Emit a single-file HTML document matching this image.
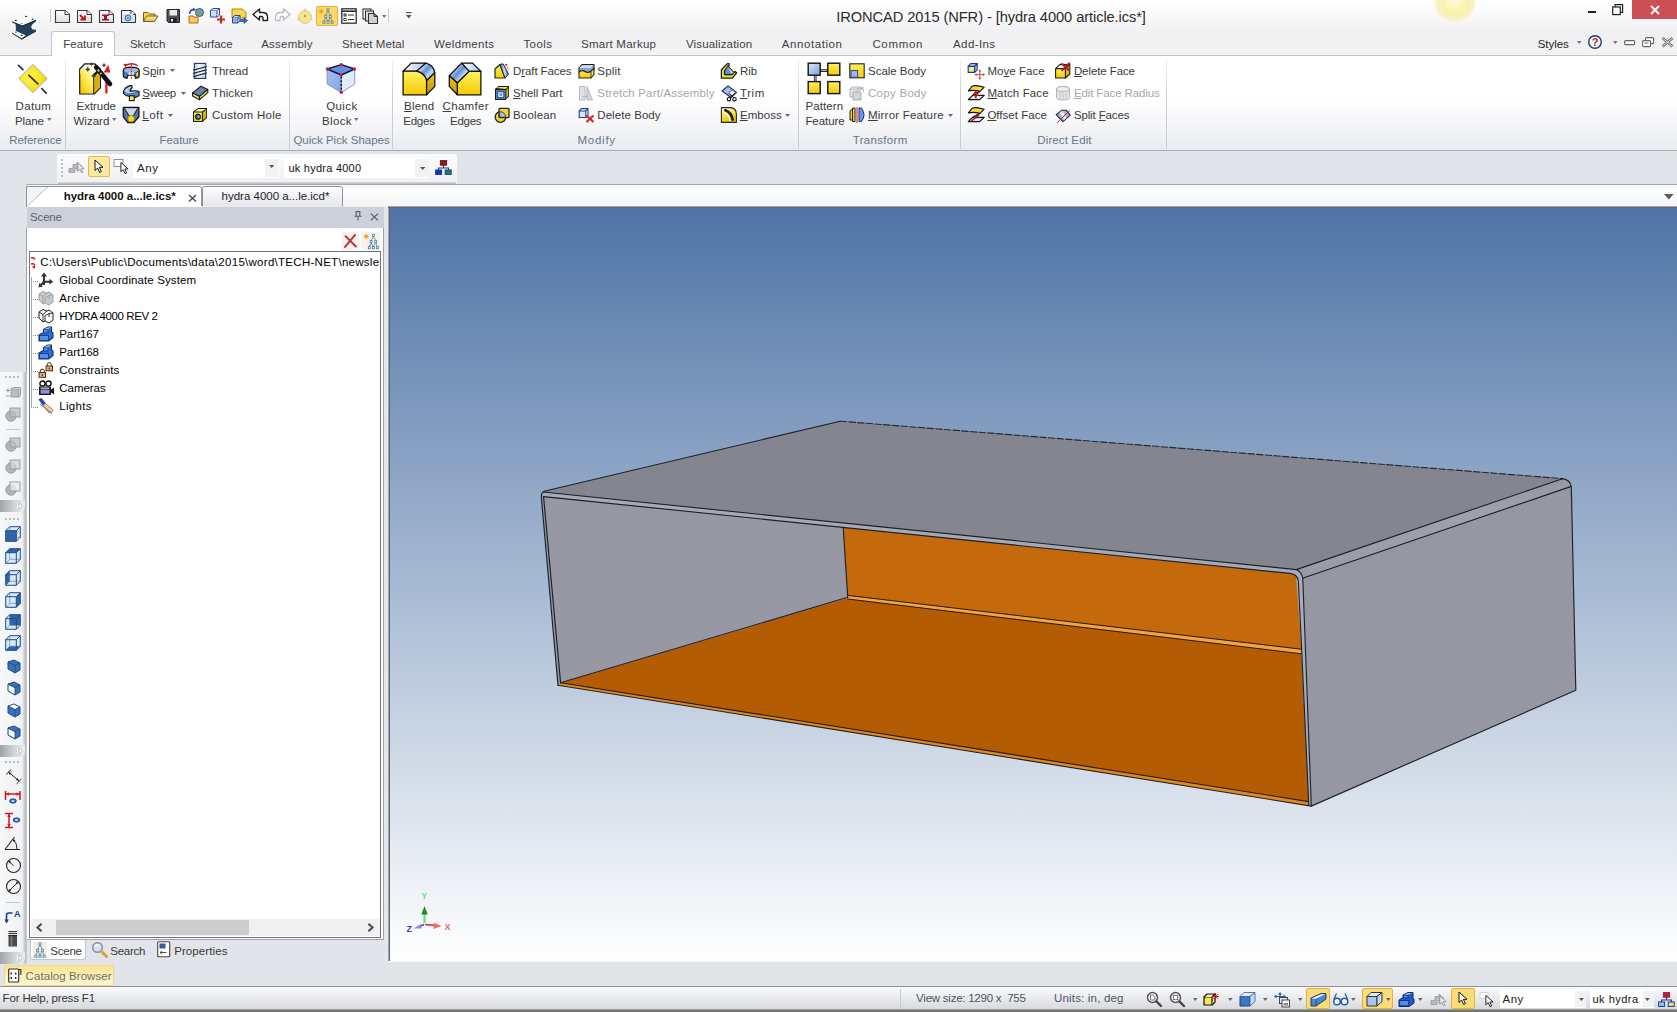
<!DOCTYPE html>
<html>
<head>
<meta charset="utf-8">
<title>IRONCAD 2015 (NFR) - [hydra 4000 article.ics*]</title>
<style>
*{box-sizing:border-box;margin:0;padding:0}
html,body{width:1677px;height:1012px;overflow:hidden;background:#e1e4e8}
body{position:relative;font-family:"Liberation Sans",sans-serif;font-size:11.5px;color:#3c3c3c}
.abs{position:absolute}
.t{position:absolute;white-space:pre;line-height:14px;height:14px}
.g{color:#9a9da1}
.lbl{color:#6e7b8c}
svg{position:absolute;overflow:visible}
u{text-decoration:underline;text-underline-offset:1px}
/* ---- title + ribbon ---- */
#title{left:0;top:0;width:1677px;height:56px;background:linear-gradient(#ffffff 0px,#f7f7f8 20px,#efeff1 36px,#f4f4f5 56px)}
#tabline{left:0;top:55px;width:1677px;height:1px;background:#c2c5c9}
#ftab{left:51px;top:31px;width:64px;height:25px;background:#fff;border:1px solid #c2c5c9;border-bottom:none;border-radius:3px 3px 0 0}
#ribbon{left:0;top:56px;width:1677px;height:94px;background:linear-gradient(#ffffff 0px,#ffffff 42px,#f5f6f8 68px,#e8ebef 94px)}
#ribline{left:0;top:150px;width:1677px;height:1px;background:#a9adb3}
.sep{position:absolute;top:58px;width:1px;height:91px;background:linear-gradient(rgba(200,203,208,.2),#c9ccd1 40%,#c9ccd1)}
#tbarea{left:0;top:151px;width:1677px;height:32px;background:#e1e4e8}
#seltb{left:57px;top:154px;width:400px;height:29px;background:linear-gradient(#fcfcfd,#eff0f3);border-radius:3px 3px 0 0}
#docrow{left:26px;top:184px;width:1651px;height:23px;background:linear-gradient(#f4f5f6 0,#fefefe 5px,#f2f3f5 23px);border-top:1px solid #a6a9ae}
#seltbsh{left:58px;top:182px;width:398px;height:2px;background:linear-gradient(#d9dbdf,#b4b7bd)}
/* ---- viewport ---- */
#vp{left:390px;top:208px;width:1287px;height:753px;background:linear-gradient(rgb(79,116,166),rgb(255,255,255))}
#vpbL{left:388px;top:206px;width:2px;height:755px;background:linear-gradient(90deg,#a2a6ad 0 1px,#5c6573 1px 2px)}
#vpbT{left:388px;top:206px;width:1289px;height:2px;background:linear-gradient(#a2a6ad 0 1px,#5c6573 1px 2px)}
#vpbB{left:388px;top:961px;width:1289px;height:1px;background:#f6f7f8}
/* ---- scene panel ---- */
#scenehdr{left:27px;top:207px;width:357px;height:21px;background:#ccd1d9}
#scenebody{left:26px;top:228px;width:358px;height:712px;background:#fff;border:1px solid #9ea2a8;border-top:none}
#tree{left:29px;top:251px;width:352px;height:687px;background:#fff;border:1px solid #6f7378}
#split{left:384px;top:207px;width:4px;height:755px;background:#e4e6ea}
#lefttb{left:0;top:375px;width:25px;height:486px;background:linear-gradient(90deg,#f6f7f8,#eceef0);border-radius:0 3px 3px 0}
/* ---- bottom ---- */
#status{left:0;top:987px;width:1677px;height:23px;background:linear-gradient(#fbfbfc 0,#f0f1f3 30%,#e0e2e6 70%,#d6d9dd 100%)}
#statline{left:0;top:986px;width:1677px;height:1px;background:#8e9196}
#botline{left:0;top:1009px;width:1677px;height:3px;background:linear-gradient(#b4b6b9,#7a7a7a 40%,#6e6e6e)}
</style>
</head>
<body>
<!-- TITLE / TABS -->
<div id="title" class="abs"></div>
<div id="tabline" class="abs"></div>
<div id="ftab" class="abs"></div>
<div id="ribbon" class="abs"></div>
<div id="ribline" class="abs"></div>
<div id="tbarea" class="abs"></div>
<div id="seltb" class="abs"></div>
<div id="docrow" class="abs"></div>
<div id="seltbsh" class="abs"></div>
<!--TITLEBAR-->
<!--RIBBON_START-->
<svg width="0" height="0" style="left:0;top:0"><defs>
<linearGradient id="gy" x1="0" y1="0" x2="0" y2="1"><stop offset="0" stop-color="#fff262"/><stop offset="1" stop-color="#f6ca00"/></linearGradient>
<linearGradient id="gy2" x1="0" y1="0" x2="1" y2="1"><stop offset="0" stop-color="#fff9a0"/><stop offset="1" stop-color="#e8b800"/></linearGradient>
<linearGradient id="gyd" x1="0" y1="0" x2="0" y2="1"><stop offset="0" stop-color="#e9c21a"/><stop offset="1" stop-color="#c79a00"/></linearGradient>
<linearGradient id="gb" x1="0" y1="0" x2="1" y2="1"><stop offset="0" stop-color="#dbe8fa"/><stop offset="1" stop-color="#7f9fd6"/></linearGradient>
<linearGradient id="gb2" x1="0" y1="0" x2="1" y2="0"><stop offset="0" stop-color="#456fae"/><stop offset=".5" stop-color="#c9dcf3"/><stop offset="1" stop-color="#4b76b4"/></linearGradient>
<linearGradient id="gdoc" x1="0" y1="0" x2="0" y2="1"><stop offset="0" stop-color="#ffffff"/><stop offset="1" stop-color="#dcdde1"/></linearGradient>
<linearGradient id="gfold" x1="0" y1="0" x2="0" y2="1"><stop offset="0" stop-color="#fff0a0"/><stop offset="1" stop-color="#e2b83a"/></linearGradient>
<radialGradient id="glow"><stop offset="0" stop-color="#fffbe0"/><stop offset=".55" stop-color="#fbf2a8"/><stop offset=".85" stop-color="#f7ecb0" stop-opacity=".7"/><stop offset="1" stop-color="#f7ecb0" stop-opacity="0"/></radialGradient>
</defs></svg>
<svg style="left:8px;top:10px" width="32" height="32" viewBox="8 10 32 32"><path d="M15.6,23 L15.9,31 L21.8,39.6 L36,31.8 L36,29.6 Q32,30.5 31.2,27.5 Q31,24.5 36,21.5 L36,19.8 L22.3,25.6Z" fill="#22405a"/><path d="M12,21.3 L25.5,14.9 L36,19.7 L22.3,25.5Z" fill="#fbfbfc"/><path d="M12,21.3 L22.3,25.5 L36,19.7 L36,20.9 L22.3,26.8 L12,22.5Z" fill="#1c2c3c"/><path d="M12,32.4 L15.7,30.7 L25.9,35.4 L21.8,38.6Z" fill="#f4f5f7"/><path d="M12,32.4 L21.8,38.6 L25.9,35.4 L25.9,36.4 L21.8,39.8 L12,33.5Z" fill="#1c2c3c"/><ellipse cx="15.8" cy="20.4" rx="1.1" ry=".6" fill="#222"/><ellipse cx="26" cy="16.4" rx="1.1" ry=".6" fill="#222"/><ellipse cx="32.6" cy="19.2" rx="1" ry=".6" fill="#222"/><ellipse cx="21.7" cy="23.6" rx="1" ry=".6" fill="#6a8096"/><ellipse cx="15.9" cy="32.1" rx=".9" ry=".5" fill="#222"/><ellipse cx="21.6" cy="35.4" rx="1" ry=".55" fill="#222"/></svg>
<div class="abs" style="left:50px;top:9px;width:1px;height:13px;background:#c4c6ca"></div>
<svg style="left:54.0px;top:8.0px" width="17" height="16" viewBox="0 0 17 16"><path d="M1.5,2.5H11L15.5,6.5V14.5H1.5Z" fill="url(#gdoc)" stroke="#3a3a3a" stroke-width="1.1" stroke-linejoin="round"/><path d="M11,2.5V6.5H15.5" fill="#fff" stroke="#3a3a3a" stroke-width="1"/></svg>
<svg style="left:76.0px;top:8.0px" width="17" height="16" viewBox="0 0 17 16"><path d="M1.5,2.5H11L15.5,6.5V14.5H1.5Z" fill="url(#gdoc)" stroke="#3a3a3a" stroke-width="1.1" stroke-linejoin="round"/><path d="M11,2.5V6.5H15.5" fill="#fff" stroke="#3a3a3a" stroke-width="1"/><path d="M4,7L8,11M4.5,11.5H9V7.5" stroke="#c01818" stroke-width="1.8" fill="none"/></svg>
<svg style="left:98.0px;top:8.0px" width="17" height="16" viewBox="0 0 17 16"><path d="M1.5,2.5H11L15.5,6.5V14.5H1.5Z" fill="url(#gdoc)" stroke="#3a3a3a" stroke-width="1.1" stroke-linejoin="round"/><path d="M11,2.5V6.5H15.5" fill="#fff" stroke="#3a3a3a" stroke-width="1"/><path d="M4,6.5H11V8H9V11H11V12.5H4V11H6V8H4Z" fill="#a80f1c"/></svg>
<svg style="left:120.0px;top:8.0px" width="17" height="16" viewBox="0 0 17 16"><path d="M1.5,2.5H11L15.5,6.5V14.5H1.5Z" fill="url(#gdoc)" stroke="#3a3a3a" stroke-width="1.1" stroke-linejoin="round"/><path d="M11,2.5V6.5H15.5" fill="#fff" stroke="#3a3a3a" stroke-width="1"/><rect x="3" y="6" width="10" height="7.5" fill="#cfe3f6"/><circle cx="8" cy="10" r="2.6" fill="none" stroke="#3e78b8" stroke-width="1.2"/><circle cx="8" cy="10" r=".9" fill="#2a5a98"/></svg>
<svg style="left:142.0px;top:8.0px" width="17" height="16" viewBox="0 0 17 16"><path d="M1.5,13.5V4.5H6L7.5,6H13V8" fill="#f2d25a" stroke="#7a5c10" stroke-width="1"/><path d="M1.5,13.5L4.5,8H16L12.5,13.5Z" fill="url(#gfold)" stroke="#7a5c10" stroke-width="1" stroke-linejoin="round"/></svg>
<svg style="left:166.0px;top:8.0px" width="15" height="16" viewBox="0 0 15 16"><path d="M1,1.5H13.5V14.5H2.5L1,13Z" fill="#4a4f58" stroke="#23262b" stroke-width="1"/><rect x="3.5" y="2" width="7.5" height="5.5" fill="#e6e9ee"/><rect x="4" y="10" width="6.5" height="4.5" fill="#1d2026"/><rect x="5" y="11" width="2" height="2.5" fill="#e6e9ee"/></svg>
<svg style="left:187.0px;top:7.0px" width="18" height="18" viewBox="0 0 18 18"><path d="M2,16V9H6L7,10H11V16Z" fill="#f6c860" stroke="#b86a10" stroke-width="1"/><circle cx="12.5" cy="5.5" r="4" fill="#7a9ad8" stroke="#3a4a9a" stroke-width="1"/><path d="M9,5 Q12,2 15,6 Q13,9 10,8Z" fill="#6bb04a"/><path d="M2.5,7 Q3,2.5 7,2.5" fill="none" stroke="#2a4ab0" stroke-width="1.6"/><path d="M6,.8L9,2.6L6,4.6Z" fill="#2a4ab0"/></svg>
<svg style="left:209.0px;top:7.0px" width="17" height="18" viewBox="0 0 17 18"><path d="M1.5,3.5H8V10H1.5Z" fill="#cfe0f6" stroke="#2a4a9a" stroke-width="1"/><path d="M1.5,3.5L4,1.5H10.5L8,3.5M10.5,1.5V8L8,10" fill="#e8f0fb" stroke="#2a4a9a" stroke-width="1"/><path d="M12,8.5V16.5M8,12.5H16" stroke="#c8281e" stroke-width="2.2"/></svg>
<svg style="left:231.0px;top:7.0px" width="17" height="18" viewBox="0 0 17 18"><path d="M1,2H11L15,5.5V11H1Z" fill="#f7d84a" stroke="#a88a10" stroke-width="1"/><path d="M1.5,10.5H7V16H1.5Z" fill="#8fb2e4" stroke="#2a4a9a" stroke-width="1"/><path d="M1.5,10.5L3.5,8.5H9L7,10.5M9,8.5V14L7,16" fill="#c6d8f2" stroke="#2a4a9a" stroke-width="1"/><path d="M9.5,12.5H13V10.5L16.5,13.5L13,16.5V14.5H9.5Z" fill="#3a66c0" stroke="#1a3a8a" stroke-width=".6"/></svg>
<svg style="left:252.0px;top:8.0px" width="17" height="14" viewBox="0 0 17 14"><path d="M1,6.5L7.5,1V4.5H10.5Q15.5,4.5 15.5,9V12.5H11V10.5Q11,8.5 9.5,8.5H7.5V12Z" fill="#fff" stroke="#222" stroke-width="1.4" stroke-linejoin="round"/></svg>
<svg style="left:274.0px;top:8.0px" width="17" height="14" viewBox="0 0 17 14"><path d="M16,6.5L9.5,1V4.5H6.5Q1.5,4.5 1.5,9V12.5H6V10.5Q6,8.5 7.5,8.5H9.5V12Z" fill="#fbfbfc" stroke="#b9bcc2" stroke-width="1.3" stroke-linejoin="round"/></svg>
<svg style="left:296.0px;top:7.0px" width="18" height="18" viewBox="0 0 18 18"><circle cx="9" cy="10" r="6.5" fill="#f3e58c" stroke="#d8cf9a" stroke-width="1"/><path d="M9,1.5V4M1.5,13L3.5,12M16.5,13L14.5,12" stroke="#c9c39a" stroke-width="1.2"/><circle cx="9" cy="9" r=".9" fill="#c86a28"/></svg>
<div class="abs" style="left:316px;top:6px;width:22px;height:20px;background:#fbd867;border:1px solid #e8b23a;border-radius:2px"></div>
<svg style="left:318.0px;top:8.0px" width="17" height="16" viewBox="0 0 17 16"><g transform="translate(2,0)"><g fill="#eef6fc" stroke="#467a9e" stroke-width=".75"><path d="M8,3L5.7,7.2M8,3L10.3,7.2M5.7,9.4L3.9,13.1M5.7,9.4L8,13.1M10.3,9.4L8,13.1M10.3,9.4L12.1,13.1" fill="none"/><rect x="7" y=".8" width="2" height="2.2"/><rect x="4.7" y="7.2" width="2" height="2.2"/><rect x="9.3" y="7.2" width="2" height="2.2"/><rect x="2.9" y="13.1" width="2" height="2.2"/><rect x="7" y="13.1" width="2" height="2.2"/><rect x="11.1" y="13.1" width="2" height="2.2"/></g></g><path d="M3.2,.4V6.2M.3,3.3H6.1M1.2,1.3L5.2,5.3M5.2,1.3L1.2,5.3" stroke="#f2b430" stroke-width=".8"/><circle cx="3.2" cy="3.3" r="1.7" fill="#eea11a"/></svg>
<svg style="left:341.0px;top:8.0px" width="16" height="16" viewBox="0 0 16 16"><rect x=".8" y=".8" width="14.4" height="14.4" fill="#fff" stroke="#2e2e2e" stroke-width="1.3"/><path d="M.8,3.2H15.2" stroke="#2e2e2e" stroke-width="1.6"/><rect x="3" y="6" width="2" height="2" fill="none" stroke="#2e2e2e"/><rect x="3" y="10.5" width="2" height="2" fill="none" stroke="#2e2e2e"/><path d="M7,7H13M7,11.5H13" stroke="#2e2e2e" stroke-width="1.2"/></svg>
<svg style="left:362.0px;top:8.0px" width="18" height="17" viewBox="0 0 18 17"><rect x="1" y="1" width="8" height="10" fill="#fff" stroke="#333" stroke-width="1.1"/><rect x="3.5" y="3" width="8" height="10" fill="#e4e4e6" stroke="#333" stroke-width="1.1"/><path d="M6.5,5.5H12L15.5,8.5V15.5H6.5Z" fill="#cfd1d5" stroke="#333" stroke-width="1.1"/><path d="M12,5.5V8.5H15.5" fill="none" stroke="#333" stroke-width="1"/></svg>
<svg style="left:381.5px;top:14.5px" width="4.4" height="3" viewBox="0 0 4.4 3"><path d="M0,0H4.4L2.2,3Z" fill="#777"/></svg>
<div class="abs" style="left:388px;top:9px;width:1px;height:13px;background:#c9ccd0"></div>
<svg style="left:405.5px;top:12.0px" width="6" height="8" viewBox="0 0 6 8"><path d="M0,.6H5.6" stroke="#555" stroke-width="1.2"/><path d="M0,3H5.6L2.8,6.4Z" fill="#555"/></svg>
<svg style="left:1433.0px;top:-21.0px" width="44" height="44" viewBox="0 0 44 44"><circle cx="22" cy="22" r="22" fill="url(#glow)"/></svg>
<div class="abs" style="left:1588px;top:11px;width:8px;height:2px;background:#222"></div>
<svg style="left:1612.0px;top:4.0px" width="12" height="12" viewBox="0 0 12 12"><rect x=".7" y="3" width="7.6" height="7.6" fill="#fff" stroke="#222" stroke-width="1.2"/><path d="M3,3V.7H10.6V8.3H8.3" fill="none" stroke="#222" stroke-width="1.2"/></svg>
<div class="abs" style="left:1632px;top:0;width:45px;height:19px;background:#cb4f55"></div>
<svg style="left:1650.0px;top:5.0px" width="10" height="10" viewBox="0 0 10 10"><path d="M1,1L9,9M9,1L1,9" stroke="#fff" stroke-width="1.8"/></svg>
<svg style="left:1577.0px;top:40.5px" width="4.6" height="3" viewBox="0 0 4.6 3"><path d="M0,0H4.6L2.3,3Z" fill="#777"/></svg>
<svg style="left:1587.0px;top:34.0px" width="16" height="16" viewBox="0 0 16 16"><circle cx="8" cy="8" r="6.3" fill="#f7f9fc" stroke="#1f3a70" stroke-width="1.4"/><text x="8" y="12" text-anchor="middle" font-family="Liberation Sans" font-weight="bold" font-size="11" fill="#c8161c">?</text></svg>
<svg style="left:1612.5px;top:40.5px" width="4.6" height="3" viewBox="0 0 4.6 3"><path d="M0,0H4.6L2.3,3Z" fill="#777"/></svg>
<svg style="left:1624.0px;top:40.0px" width="12" height="6" viewBox="0 0 12 6"><rect x=".6" y=".6" width="10" height="4" rx="1" fill="#fff" stroke="#666" stroke-width="1.1"/></svg>
<svg style="left:1642.0px;top:37.0px" width="13" height="11" viewBox="0 0 13 11"><rect x="3.6" y=".6" width="8" height="6" rx="1" fill="#fff" stroke="#666" stroke-width="1.1"/><rect x=".6" y="3.6" width="8" height="6" rx="1" fill="#fff" stroke="#666" stroke-width="1.1"/><path d="M2.5,6H6.5" stroke="#666"/></svg>
<svg style="left:1661.0px;top:37.0px" width="13" height="11" viewBox="0 0 13 11"><path d="M1.5,1L11.5,9.5M11.5,1L1.5,9.5" stroke="#666" stroke-width="2.6"/><path d="M1.5,1L11.5,9.5M11.5,1L1.5,9.5" stroke="#fff" stroke-width=".9"/></svg>
<div class="sep" style="left:65.0px"></div>
<div class="sep" style="left:288.5px"></div>
<div class="sep" style="left:392.0px"></div>
<div class="sep" style="left:797.5px"></div>
<div class="sep" style="left:959.5px"></div>
<div class="sep" style="left:1166.0px"></div>
<svg style="left:16.0px;top:62.0px" width="34" height="34" viewBox="0 0 34 34"><defs><radialGradient id="dpg" cx=".4" cy=".45" r=".7"><stop offset="0" stop-color="#fff64a"/><stop offset=".6" stop-color="#f4e21e"/><stop offset="1" stop-color="#d9c008"/></radialGradient></defs><path d="M2,2.8L7.4,8.2M25.3,26.1L30.7,31.6" stroke="#2e2e55" stroke-width="1.7"/><path d="M17,2.3L31.2,16.5L17,30.7L2.8,16.5Z" fill="url(#dpg)" stroke="#aab0d0" stroke-width="1"/><path d="M12.4,12.8L22.4,22.4" stroke="#3a2608" stroke-width="1.7"/></svg>
<svg style="left:46.5px;top:118.3px" width="4.6" height="3" viewBox="0 0 4.6 3"><path d="M0,0H4.6L2.3,3Z" fill="#777"/></svg>
<svg style="left:76px;top:60px" width="40" height="38" viewBox="76 60 40 38"><defs><linearGradient id="ewf" x1="1" y1="0" x2="0" y2="1"><stop offset="0" stop-color="#fffef0"/><stop offset=".35" stop-color="#fff36a"/><stop offset="1" stop-color="#f3bf00"/></linearGradient></defs><path d="M79.1,68.8 L84.5,63.2 H95 L101,69 V88 L94.6,94.6 H79.1Z" fill="#141414"/><path d="M80.3,69.4 L85,64.4 H94.4 L99,68.8 L93.4,74 H80.3Z" fill="#fbf8e4"/><path d="M80.3,69.6 H93.2 V93.6 H80.3Z" fill="url(#ewf)"/><path d="M94.1,76.5 L100,71 V87.6 L94.1,93.4Z" fill="#dcae08"/><path d="M106.4,93.4 V80" stroke="#e41a1a" stroke-width="2.3"/><path d="M103.6,72.5 L108.2,64.8 L110.4,72.5Z" fill="#e41a1a"/><path d="M96.2,67.2 L110,84" stroke="#121212" stroke-width="4.6" stroke-linecap="round"/><path d="M97.6,69.4 L99.2,71.4 M100.4,72.8 L101.4,74" stroke="#d8d8d8" stroke-width="1.6"/><g fill="#3a3a3a"><path d="M87.8,66.6l.9,1.8 1.8.9-1.8.9-.9,1.8-.9-1.8-1.8-.9 1.8-.9z"/><path d="M93.6,73.2l.9,1.8 1.8.9-1.8.9-.9,1.8-.9-1.8-1.8-.9 1.8-.9z"/><path d="M91.4,62l.7,1.4 1.4.7-1.4.7-.7,1.4-.7-1.4-1.4-.7 1.4-.7z"/><path d="M104,62.8l.8,1.6 1.6.8-1.6.8-.8,1.6-.8-1.6-1.6-.8 1.6-.8z"/></g></svg>
<svg style="left:111.5px;top:118.3px" width="4.6" height="3" viewBox="0 0 4.6 3"><path d="M0,0H4.6L2.3,3Z" fill="#777"/></svg>
<svg style="left:324px;top:61px" width="34" height="35" viewBox="324 61 34 35"><defs><linearGradient id="qbl" x1="0" y1="0" x2="1" y2="1"><stop offset="0" stop-color="#a9c2f0"/><stop offset="1" stop-color="#7fa4e4"/></linearGradient></defs><path d="M327,69 L341.3,75 V92.6 L327.2,84.1Z" fill="url(#qbl)" stroke="#6a86c0" stroke-width=".8"/><path d="M341.3,75 L354.6,69 L354.8,84.1 L341.3,92.6Z" fill="#dfeafb" stroke="#6a86c0" stroke-width=".8"/><path d="M327,69 L341.3,64.6 L354.6,69 L341.3,75Z" fill="#6690dc" stroke="#0e1a4a" stroke-width="1.5" stroke-linejoin="round"/><path d="M341.3,76.5 V91" stroke="#0e1030" stroke-width="1.4" stroke-dasharray="2,1.7"/><g fill="#c81e3c"><circle cx="327.4" cy="69" r="1.7"/><circle cx="341.3" cy="64.8" r="1.7"/><circle cx="354.4" cy="69" r="1.7"/><circle cx="341.3" cy="75" r="1.7"/><circle cx="341.3" cy="92.2" r="1.7"/></g></svg>
<svg style="left:354.0px;top:118.3px" width="4.6" height="3" viewBox="0 0 4.6 3"><path d="M0,0H4.6L2.3,3Z" fill="#777"/></svg>
<svg style="left:400px;top:60px" width="38" height="38" viewBox="400 60 38 38"><defs><linearGradient id="blg" x1="0" y1="0" x2="1" y2=".9"><stop offset="0" stop-color="#4f82c8"/><stop offset=".3" stop-color="#b4cdf0"/><stop offset=".5" stop-color="#5f90d4"/><stop offset=".7" stop-color="#c4d8f4"/><stop offset="1" stop-color="#4a7cc2"/></linearGradient><linearGradient id="tpg" x1="0" y1="0" x2="1" y2="0"><stop offset="0" stop-color="#ffffff"/><stop offset="1" stop-color="#a9c2e8"/></linearGradient></defs><g stroke="#0c0c0c" stroke-width="1.25" stroke-linejoin="round"><path d="M403.1,71.2 L411.2,63.1 H425.9 L416.3,71.4Z" fill="url(#tpg)"/><path d="M416.3,71.4 L425.9,63.1 Q433.5,65 434.8,72.6 L426.6,80.8 Q425,73 416.3,71.4Z" fill="url(#blg)"/><path d="M403.1,94.8 V71.2 H416.3 Q425,73 426.6,80.8 V94.8Z" fill="url(#gy)"/><path d="M426.6,80.8 L434.8,72.6 V86.4 L426.6,94.8Z" fill="url(#gyd)"/></g></svg>
<svg style="left:446px;top:60px" width="38" height="38" viewBox="446 60 38 38"><g stroke="#0c0c0c" stroke-width="1.25" stroke-linejoin="round"><path d="M461.6,63.1 H472.6 L480.9,71.4 H469.1Z" fill="url(#tpg)"/><path d="M449.3,75.7 L461.6,63.1 L469.1,71.4 L457.3,83Z" fill="url(#blg)"/><path d="M457.3,83 L469.1,71.4 H480.9 V94.8 H457.3Z" fill="url(#gy)"/><path d="M449.3,75.7 L457.3,83 V94.8 L449.3,86.4Z" fill="url(#gyd)"/></g></svg>
<svg style="left:807.0px;top:62.0px" width="35" height="33" viewBox="0 0 35 33"><path d="M13,8.6H21M8.2,13V20" stroke="#111" stroke-width="2.6"/><path d="M13.6,8.6H20.6M8.2,13.6V19.4" stroke="#fff" stroke-width=".8"/><rect x="1.2" y="1.2" width="12" height="12" fill="url(#gb)" stroke="#111" stroke-width="1.4"/><rect x="20.8" y="1.2" width="12" height="12" fill="url(#gy)" stroke="#111" stroke-width="1.4"/><rect x="1.2" y="19.6" width="12" height="12" fill="url(#gy)" stroke="#111" stroke-width="1.4"/><rect x="20.8" y="19.6" width="12" height="12" fill="url(#gy)" stroke="#111" stroke-width="1.4"/></svg>
<div class="t " style="left:836.2px;top:8.1px;font-size:14.7px;line-height:18px;height:18px;letter-spacing:-0.10px;color:#2b2b2b;">IRONCAD 2015 (NFR) - [hydra 4000 article.ics*]</div>
<div class="t " style="left:63.2px;top:36.8px;font-size:11.5px;line-height:14px;height:14px;letter-spacing:0.04px;color:#3f3f3f;">Feature</div>
<div class="t " style="left:129.9px;top:36.8px;font-size:11.5px;line-height:14px;height:14px;letter-spacing:0.05px;color:#3f3f3f;">Sketch</div>
<div class="t " style="left:193.2px;top:36.8px;font-size:11.5px;line-height:14px;height:14px;letter-spacing:-0.03px;color:#3f3f3f;">Surface</div>
<div class="t " style="left:261.2px;top:36.8px;font-size:11.5px;line-height:14px;height:14px;letter-spacing:0.22px;color:#3f3f3f;">Assembly</div>
<div class="t " style="left:342.0px;top:36.8px;font-size:11.5px;line-height:14px;height:14px;letter-spacing:0.09px;color:#3f3f3f;">Sheet Metal</div>
<div class="t " style="left:434.0px;top:36.8px;font-size:11.5px;line-height:14px;height:14px;letter-spacing:0.35px;color:#3f3f3f;">Weldments</div>
<div class="t " style="left:523.4px;top:36.8px;font-size:11.5px;line-height:14px;height:14px;letter-spacing:0.45px;color:#3f3f3f;">Tools</div>
<div class="t " style="left:581.0px;top:36.8px;font-size:11.5px;line-height:14px;height:14px;letter-spacing:0.25px;color:#3f3f3f;">Smart Markup</div>
<div class="t " style="left:686.0px;top:36.8px;font-size:11.5px;line-height:14px;height:14px;letter-spacing:0.15px;color:#3f3f3f;">Visualization</div>
<div class="t " style="left:781.8px;top:36.8px;font-size:11.5px;line-height:14px;height:14px;letter-spacing:0.57px;color:#3f3f3f;">Annotation</div>
<div class="t " style="left:872.4px;top:36.8px;font-size:11.5px;line-height:14px;height:14px;letter-spacing:0.67px;color:#3f3f3f;">Common</div>
<div class="t " style="left:953.0px;top:36.8px;font-size:11.5px;line-height:14px;height:14px;letter-spacing:0.41px;color:#3f3f3f;">Add-Ins</div>
<div class="t " style="left:1537.7px;top:37.2px;font-size:11.5px;line-height:14px;height:14px;letter-spacing:-0.04px;color:#1e1e1e;">Styles</div>
<div class="t " style="left:9.3px;top:132.6px;font-size:11.5px;line-height:14px;height:14px;letter-spacing:-0.08px;color:#6a7686;">Reference</div>
<div class="t " style="left:159.6px;top:132.6px;font-size:11.5px;line-height:14px;height:14px;letter-spacing:-0.08px;color:#6a7686;">Feature</div>
<div class="t " style="left:293.4px;top:132.6px;font-size:11.5px;line-height:14px;height:14px;letter-spacing:-0.01px;color:#6a7686;">Quick Pick Shapes</div>
<div class="t " style="left:577.4px;top:132.6px;font-size:11.5px;line-height:14px;height:14px;letter-spacing:0.77px;color:#6a7686;">Modify</div>
<div class="t " style="left:852.8px;top:132.6px;font-size:11.5px;line-height:14px;height:14px;letter-spacing:0.31px;color:#6a7686;">Transform</div>
<div class="t " style="left:1037.3px;top:132.6px;font-size:11.5px;line-height:14px;height:14px;letter-spacing:0.12px;color:#6a7686;">Direct Edit</div>
<div class="t " style="left:15.6px;top:99.0px;font-size:11.5px;line-height:14px;height:14px;letter-spacing:0.32px;color:#3a3a3a;">Datum</div>
<div class="t " style="left:15.0px;top:113.6px;font-size:11.5px;line-height:14px;height:14px;letter-spacing:-0.12px;color:#3a3a3a;">Plane</div>
<div class="t " style="left:76.6px;top:99.0px;font-size:11.5px;line-height:14px;height:14px;letter-spacing:-0.06px;color:#3a3a3a;">Extrude</div>
<div class="t " style="left:73.5px;top:113.6px;font-size:11.5px;line-height:14px;height:14px;letter-spacing:0.00px;color:#3a3a3a;">Wizard</div>
<div class="t " style="left:326.3px;top:99.0px;font-size:11.5px;line-height:14px;height:14px;letter-spacing:0.36px;color:#3a3a3a;">Quick</div>
<div class="t " style="left:322.0px;top:113.6px;font-size:11.5px;line-height:14px;height:14px;letter-spacing:0.34px;color:#3a3a3a;">Block</div>
<div class="t " style="left:404.0px;top:99.0px;font-size:11.5px;line-height:14px;height:14px;letter-spacing:0.20px;color:#3a3a3a;"><u>B</u>lend</div>
<div class="t " style="left:403.2px;top:113.6px;font-size:11.5px;line-height:14px;height:14px;letter-spacing:-0.20px;color:#3a3a3a;">Edges</div>
<div class="t " style="left:442.6px;top:99.0px;font-size:11.5px;line-height:14px;height:14px;letter-spacing:0.30px;color:#3a3a3a;"><u>C</u>hamfer</div>
<div class="t " style="left:450.0px;top:113.6px;font-size:11.5px;line-height:14px;height:14px;letter-spacing:-0.26px;color:#3a3a3a;">Edges</div>
<div class="t " style="left:805.4px;top:98.6px;font-size:11.5px;line-height:14px;height:14px;letter-spacing:0.12px;color:#3a3a3a;">Pattern</div>
<div class="t " style="left:805.4px;top:113.6px;font-size:11.5px;line-height:14px;height:14px;letter-spacing:-0.06px;color:#3a3a3a;">Feature</div>
<svg style="left:122px;top:62px" width="19" height="18" viewBox="122 62 19 18"><path d="M123.3,70.5 Q123.3,67.2 131.2,67.2 Q139.2,67.2 139.2,70.5 V75.6 Q139.2,78.3 135.5,78.3 L134.6,75.2 H128 L127,78.3 Q123.3,78 123.3,75.6Z" fill="#4d74b2" stroke="#10141c" stroke-width="1.2" stroke-linejoin="round"/><path d="M124,70.4 Q124.5,68 131.2,68 Q138,68 138.5,70.4 Q137,72.6 134.4,72.8 L133.4,71 H129 L128,72.8 Q125.4,72.6 124,70.4Z" fill="#9dbbe6"/><path d="M128.3,73 L129.2,71.2 H133.2 L134.2,73 V75 H128.3Z" fill="#c9d6ea"/><path d="M135.8,72.6 L138.7,71.4 V76.2 L135.8,77.6Z" fill="#f6e23a" stroke="#10141c" stroke-width=".7"/><path d="M131.4,64 V79.4" stroke="#d01a1a" stroke-width=".9" stroke-dasharray="2.2,1"/><path d="M125.4,65.8 Q131.5,61.8 137.6,65.6" fill="none" stroke="#d01a1a" stroke-width="1.3"/><path d="M123.3,64 L127.4,63.8 L125.4,67.2Z" fill="#d01a1a"/></svg>
<svg style="left:170.2px;top:69.4px" width="5" height="3" viewBox="0 0 5 3"><path d="M0,0H5L2.5,3Z" fill="#6a6a6a"/></svg>
<svg style="left:122px;top:84px" width="19" height="18" viewBox="122 84 19 18"><path d="M131.5,85.4 Q125,86.5 123.5,91.4 V93.6 Q126,96 129.5,96.4 L134,98 L139,95.6 V91.4 Q135.5,90.2 131,91.2 Q129.6,90.2 131.2,88.6 Q133,88 131.5,85.4Z" fill="#3e5f8e" stroke="#10141c" stroke-width="1.2" stroke-linejoin="round"/><path d="M131.2,86.2 Q125.6,87.4 124.2,91.4 Q127,93.4 130,93.6 Q134,92 138.4,92 Q135,90.8 130.4,92 Q128,90.4 130.4,88.2 Q132,87.6 131.2,86.2Z" fill="#b9cfec"/><path d="M124.2,91.8 Q127,93.8 130,94 Q134,92.6 138.4,92.4 V95.2 L134,97.2 L129.6,95.8 Q126,95.4 124.2,93.4Z" fill="#5f86c0"/><rect x="129.4" y="95.8" width="4.8" height="4.8" fill="#f7ea45" stroke="#10141c" stroke-width="1.1"/></svg>
<svg style="left:181.3px;top:91.6px" width="5" height="3" viewBox="0 0 5 3"><path d="M0,0H5L2.5,3Z" fill="#6a6a6a"/></svg>
<svg style="left:122px;top:106px" width="19" height="18" viewBox="122 106 19 18"><path d="M123.3,107.4 H138.9 V116.8 L133.8,122.6 H127.8 L123.3,116.8Z" fill="#55749f" stroke="#10141c" stroke-width="1.3" stroke-linejoin="round"/><path d="M124.8,108.3 H137.4 L133.4,115.6 H129Z" fill="#cdd6e6"/><path d="M124.6,108.4 L129,115.8 M137.6,108.4 L133.4,115.8" stroke="#10141c" stroke-width=".9"/><circle cx="131.1" cy="118.8" r="3.2" fill="#fbd916" stroke="#8a7400" stroke-width=".5"/></svg>
<svg style="left:168.3px;top:113.8px" width="5" height="3" viewBox="0 0 5 3"><path d="M0,0H5L2.5,3Z" fill="#6a6a6a"/></svg>
<svg style="left:191px;top:62px" width="18" height="18" viewBox="191 62 18 18"><defs><linearGradient id="thg" x1="0" y1="0" x2="1" y2="0"><stop offset="0" stop-color="#a9c0e2"/><stop offset=".45" stop-color="#f4f8fd"/><stop offset="1" stop-color="#b4c9e8"/></linearGradient></defs><rect x="194.3" y="63.4" width="11.4" height="15" fill="url(#thg)" stroke="#22355c" stroke-width="1.1"/><path d="M193,70.2 L206.8,66.4 M193,73.4 L206.8,69.6 M193,76.6 L206.8,72.8" stroke="#1c2a48" stroke-width="1.3"/><path d="M194.6,68.6 L205.4,65.6 M194.6,71.8 L205.4,68.8 M194.6,75 L205.4,72" stroke="#fff" stroke-width=".7" opacity=".8"/></svg>
<svg style="left:191px;top:84px" width="18" height="18" viewBox="191 84 18 18"><g stroke="#1a1a1a" stroke-width="1.1" stroke-linejoin="round"><path d="M192.6,92.9 L200.9,86.3 L207.8,89.4 L199.5,96.4Z" fill="#6f7fb6"/><path d="M192.6,92.9 L199.5,96.4 V99.7 L192.6,96.1Z" fill="#e9e976"/><path d="M199.5,96.4 L207.8,89.4 V92.7 L199.5,99.7Z" fill="#dede5a"/></g></svg>
<svg style="left:192.0px;top:107.2px" width="16" height="16" viewBox="0 0 16 16"><path d="M1,4.5L6.5,1H15V11L10.5,15H1Z" fill="#1a1a1a"/><path d="M2,5.5H10V14H2Z" fill="url(#gy)"/><path d="M2.6,4.6L6.8,2H14L10.2,4.6Z" fill="#fff6a0"/><path d="M11,5.4L14.2,2.8V10.6L11,13.6Z" fill="url(#gyd)"/><circle cx="6" cy="9.7" r="2.7" fill="#2a5a8a" stroke="#111" stroke-width=".9"/><circle cx="6.5" cy="9.8" r="1.2" fill="#7ab6e0"/></svg>
<svg style="left:494.0px;top:63.0px" width="17" height="16" viewBox="0 0 17 16"><path d="M1,15V6L6,1.5L11,15Z" fill="url(#gy)" stroke="#222" stroke-width="1.2" stroke-linejoin="round"/><path d="M6,1.5L9,0.8L14.5,11L11,15Z" fill="url(#gb2)" stroke="#222" stroke-width="1"/><path d="M12,1.5L15.5,7.5" stroke="#b01818" stroke-width=".9" stroke-dasharray="1.3,1"/><path d="M10.8,2.6L12.2,.4L13.8,2Z" fill="#b01818"/></svg>
<svg style="left:494.0px;top:85.3px" width="16" height="16" viewBox="0 0 16 16"><path d="M1,4L4.5,1H15V11.5L11.5,15H1Z" fill="#1a1a1a"/><path d="M2,2.9L4.9,2H14L11.4,4Z" fill="#f4e05a"/><path d="M12.3,4.6L14.2,2.8V11L12.3,13Z" fill="#d8b21a"/><rect x="2" y="5" width="9.5" height="9" fill="#4e7fc0"/><rect x="3.8" y="6.8" width="6" height="5.6" fill="#e9f1fb" stroke="#1e3f7a" stroke-width=".9"/><rect x="5.6" y="8.3" width="2.6" height="2.6" fill="#5b8fd0"/></svg>
<svg style="left:494.0px;top:107.2px" width="16" height="16" viewBox="0 0 16 16"><circle cx="6.5" cy="10" r="5.3" fill="#f4d62a" stroke="#222" stroke-width="1.3"/><rect x="5" y="1.3" width="10" height="9.4" rx="1" fill="#f4d62a" stroke="#222" stroke-width="1.3"/><path d="M5.6,4.8A5.3,5.3 0 0 1 11.7,10.2H5.6Z" fill="#a8c2ea" stroke="#222" stroke-width=".8"/></svg>
<svg style="left:578.0px;top:63.0px" width="17" height="16" viewBox="0 0 17 16"><path d="M1,5L4,1.5H16V6L13,9.5H1Z" fill="#7ea3da" stroke="#222" stroke-width="1.1" stroke-linejoin="round"/><path d="M1.6,5L4.3,2.2H15.2L12.8,5Z" fill="#cfe0f5"/><path d="M1,9Q4,6.5 7,8.5T13,8L16,5.5V11.5L13,15H1Z" fill="url(#gy)" stroke="#222" stroke-width="1.1" stroke-linejoin="round"/><path d="M13,8.5V15" stroke="#222" stroke-width=".8"/></svg>
<svg style="left:578.0px;top:85.3px" width="16" height="16" viewBox="0 0 16 16"><path d="M1.5,15V1.5H7V15Z" fill="#e0e2e5" stroke="#b4b7bc" stroke-width="1"/><path d="M9,1.5L14.5,15H9Z" fill="#d3d6da" stroke="#b4b7bc" stroke-width="1"/><path d="M4,11.5H9.5M8,10L10,11.5L8,13" fill="none" stroke="#b4b7bc" stroke-width="1"/></svg>
<svg style="left:578.0px;top:107.2px" width="17" height="16" viewBox="0 0 17 16"><path d="M1.2,4H7.8V10.5H1.2Z" fill="#dbe8f8" stroke="#1e3f8a" stroke-width="1.1"/><path d="M1.2,4L3.4,1.6H10V8L7.8,10.5M7.8,4L10,1.6" fill="none" stroke="#1e3f8a" stroke-width="1.1"/><path d="M8.5,8.5L15.5,15M15.5,8.5L8.5,15" stroke="#d82424" stroke-width="2.1"/></svg>
<svg style="left:720px;top:62px" width="19" height="18" viewBox="720 62 19 18"><path d="M721.4,78.2 V69.8 L727.4,63.6 H729 V66 L724.6,70.6 V74.6 H732 L735,71.4 L736.6,72.8 L732.4,78.2Z" fill="#e4e23c" stroke="#1c1c08" stroke-width="1.3" stroke-linejoin="round"/><path d="M727.8,65.6 L734.4,72.8 L732,74.6 H724.8 V70.8Z" fill="#6f8fcc" stroke="#1c1c08" stroke-width=".9" stroke-linejoin="round"/><path d="M728.4,67.4 L732.6,72.6 L731.6,73.4Z" fill="#f4f7fc"/></svg>
<svg style="left:721.0px;top:85.3px" width="17" height="17" viewBox="0 0 17 17"><path d="M1,6L7,1L15.5,7.5L10,12.5Z" fill="#a9bfe8" stroke="#26306a" stroke-width="1.1" stroke-linejoin="round"/><path d="M7.5,8L11.5,5L15,7.8L10.5,11.5Z" fill="#f2f4fb" stroke="#26306a" stroke-width=".7"/><circle cx="8" cy="14.2" r="1.7" fill="none" stroke="#111" stroke-width="1.1"/><circle cx="13.5" cy="14.2" r="1.7" fill="none" stroke="#111" stroke-width="1.1"/><path d="M8.8,12.8L13.8,8.2M12.7,12.8L8.5,8.6" stroke="#111" stroke-width="1"/></svg>
<svg style="left:720px;top:106px" width="19" height="18" viewBox="720 106 19 18"><defs><linearGradient id="emb" x1="0" y1="0" x2=".3" y2="1"><stop offset="0" stop-color="#ffffff"/><stop offset=".45" stop-color="#fbe94a"/><stop offset="1" stop-color="#e9c400"/></linearGradient></defs><path d="M721.4,107.6 H731 Q736.4,108.6 736.4,114 V122.4 H721.4Z" fill="url(#emb)" stroke="#2a2a2a" stroke-width="1.1"/><path d="M725.4,110.2 Q731.6,112.6 732.6,119.6" fill="none" stroke="#1a2236" stroke-width="2.8" stroke-linecap="round"/><path d="M724.4,113 Q729.4,115 730.2,121" fill="none" stroke="#fff" stroke-width="1.2"/></svg>
<svg style="left:785.4px;top:113.8px" width="5" height="3" viewBox="0 0 5 3"><path d="M0,0H5L2.5,3Z" fill="#6a6a6a"/></svg>
<svg style="left:849.0px;top:63.0px" width="16" height="16" viewBox="0 0 16 16"><rect x=".8" y=".8" width="14.4" height="14" fill="url(#gy)" stroke="#333" stroke-width="1.2"/><rect x="2" y="7.6" width="6.6" height="6.6" fill="#9ebbe8" stroke="#2a4a9a" stroke-width="1"/></svg>
<svg style="left:849.0px;top:85.3px" width="17" height="16" viewBox="0 0 17 16"><path d="M1,4H9V12H1Z" fill="#e4e6e9" stroke="#a9acb1" stroke-width="1"/><path d="M4,7H12V15H4Z" fill="#d2d5d9" stroke="#a9acb1" stroke-width="1"/><path d="M1,4L3,2H11L9,4M11,2V6" fill="none" stroke="#a9acb1" stroke-width="1"/><path d="M10.5,3Q14.5,2.5 14.5,7" fill="none" stroke="#a9acb1" stroke-width="1"/><path d="M13,1.5V5M11.5,3H14.8" stroke="#a9acb1" stroke-width=".9"/></svg>
<svg style="left:849.0px;top:107.2px" width="16" height="16" viewBox="0 0 16 16"><path d="M1,5Q1,2.5 3.5,2.5V13H1Z" fill="#f6d62a" stroke="#222" stroke-width="1"/><path d="M3.5,1H6V14.5H3.5Z" fill="#f6d62a" stroke="#222" stroke-width="1"/><path d="M8,0V16" stroke="#c81818" stroke-width="1"/><path d="M10,1H12.5Q15,5 15,8T12.5,14.5H10Z" fill="#6f99dc" stroke="#1e2f7a" stroke-width="1"/></svg>
<svg style="left:947.8px;top:113.8px" width="5" height="3" viewBox="0 0 5 3"><path d="M0,0H5L2.5,3Z" fill="#6a6a6a"/></svg>
<svg style="left:967px;top:62px" width="19" height="19" viewBox="967 62 19 19"><g stroke="#1a3a9a" stroke-width="1.1" stroke-linejoin="round"><path d="M968.2,66.4 L970.6,63.6 H977.2 L974.6,66.4Z" fill="#dfeafb"/><path d="M974.6,66.4 L977.2,63.6 V69.8 L974.6,72.4Z" fill="#b9cff2"/><rect x="968.2" y="66.4" width="6.4" height="6" fill="#eef07a"/></g><path d="M979.8,70.6 V78.6 M975.8,74.6 H983.8" stroke="#c43c3c" stroke-width=".9"/><path d="M979.8,69.2L978.4,71.4H981.2ZM979.8,80L978.4,77.8H981.2ZM974.4,74.6L976.6,73.2V76ZM985.2,74.6L983,73.2V76Z" fill="#c43c3c"/></svg>
<svg style="left:967px;top:84px" width="19" height="18" viewBox="967 84 19 18"><g transform="translate(0,0)"><path d="M968.3,99.6 L972.6,95.4 H984.2 L979.6,99.6Z" fill="#dfe9fa" stroke="#111" stroke-width="1.2" stroke-linejoin="round"/><path d="M980,91.4 L972.6,95.4" stroke="#111" stroke-width="1.2"/><path d="M975.8,98.2 V92" stroke="#b81a1a" stroke-width="1.8"/><path d="M973,94.2 L975.8,90.6 L978.6,94.2Z" fill="#b81a1a"/><path d="M972.6,95.2 H979" stroke="#b81a1a" stroke-width="1.4"/><path d="M968.4,90.9 L972.2,86.2 Q976,84.6 984.2,87.2 L980,91.4 Q974,89.6 968.4,90.9Z" fill="#f5dc3c" stroke="#111" stroke-width="1.1" stroke-linejoin="round"/></g></svg>
<svg style="left:967px;top:106px" width="19" height="18" viewBox="967 106 19 18"><g transform="translate(0,22)"><path d="M968.3,99.6 L972.6,95.4 H984.2 L979.6,99.6Z" fill="#dfe9fa" stroke="#111" stroke-width="1.2" stroke-linejoin="round"/><path d="M980,91.4 L972.6,95.4" stroke="#111" stroke-width="1.2"/><path d="M971.4,99 L978.6,93.2" stroke="#a81a2a" stroke-width="1.6"/><path d="M973.2,95.6 L976.8,92.2 L977.6,96.4Z" fill="#a81a2a"/><path d="M968.4,90.9 L972.2,86.2 Q976,84.6 984.2,87.2 L980,91.4 Q974,89.6 968.4,90.9Z" fill="#f5dc3c" stroke="#111" stroke-width="1.1" stroke-linejoin="round"/></g></svg>
<svg style="left:1054px;top:61px" width="19" height="19" viewBox="1054 61 19 19"><g stroke="#1e1e1e" stroke-width="1.1" stroke-linejoin="round"><path d="M1055.6,68.6 L1060,64.4 L1069.8,64.6 L1065.4,68.6Z" fill="#fdfdfd"/><path d="M1065.4,68.6 L1069.8,64.6 V74 L1065.4,78Z" fill="#e2ba06"/><rect x="1055.6" y="68.6" width="9.8" height="9.4" fill="url(#gy)"/></g><path d="M1061.6,63.4 L1069.4,70.4 M1069.8,62.8 L1061.6,70.8" stroke="#a82424" stroke-width="2"/></svg>
<svg style="left:1055.0px;top:85.3px" width="16" height="16" viewBox="0 0 16 16"><path d="M1.5,4Q1.5,1.5 8,1.5T14.5,4V12.5Q14.5,15 8,15T1.5,12.5Z" fill="#e4e5e8" stroke="#b3b6ba" stroke-width="1"/><ellipse cx="8" cy="4" rx="6.5" ry="2.4" fill="#f0f1f3" stroke="#b3b6ba" stroke-width="1"/><path d="M5,6V14.3M11,6V14.3M8,6.4V15" stroke="#c3c6ca" stroke-width="1"/></svg>
<svg style="left:1054px;top:105px" width="19" height="19" viewBox="1054 105 19 19"><path d="M1056.2,114.6 L1062,110.2 H1066 L1070.2,115.2 L1063,121.6Z" fill="#a9b4da" stroke="#20243a" stroke-width="1.1" stroke-linejoin="round"/><path d="M1059.6,112.6 L1062.2,110.8 L1066.4,118 L1064.4,119.8Z" fill="#f2f4fb"/><path d="M1057,122.8 L1069.6,110.6" stroke="#c0202a" stroke-width="1"/></svg>
<div class="t " style="left:142.3px;top:63.9px;font-size:11.5px;line-height:14px;height:14px;letter-spacing:-0.06px;color:#3a3a3a;">S<u>p</u>in</div>
<div class="t " style="left:142.3px;top:86.0px;font-size:11.5px;line-height:14px;height:14px;letter-spacing:-0.33px;color:#3a3a3a;"><u>S</u>weep</div>
<div class="t " style="left:142.3px;top:108.0px;font-size:11.5px;line-height:14px;height:14px;letter-spacing:0.50px;color:#3a3a3a;"><u>L</u>oft</div>
<div class="t " style="left:212.0px;top:63.9px;font-size:11.5px;line-height:14px;height:14px;letter-spacing:-0.07px;color:#3a3a3a;">Thread</div>
<div class="t " style="left:212.0px;top:86.0px;font-size:11.5px;line-height:14px;height:14px;letter-spacing:0.12px;color:#3a3a3a;">Thicken</div>
<div class="t " style="left:212.0px;top:108.0px;font-size:11.5px;line-height:14px;height:14px;letter-spacing:0.30px;color:#3a3a3a;">Custom Hole</div>
<div class="t " style="left:513.0px;top:63.9px;font-size:11.5px;line-height:14px;height:14px;letter-spacing:-0.09px;color:#3a3a3a;">D<u>r</u>aft Faces</div>
<div class="t " style="left:513.0px;top:86.0px;font-size:11.5px;line-height:14px;height:14px;letter-spacing:-0.04px;color:#3a3a3a;"><u>S</u>hell Part</div>
<div class="t " style="left:513.0px;top:108.0px;font-size:11.5px;line-height:14px;height:14px;letter-spacing:0.17px;color:#3a3a3a;">Boolean</div>
<div class="t " style="left:597.3px;top:63.9px;font-size:11.5px;line-height:14px;height:14px;letter-spacing:0.21px;color:#3a3a3a;">Split</div>
<div class="t " style="left:597.3px;top:86.0px;font-size:11.5px;line-height:14px;height:14px;letter-spacing:0.17px;color:#a4a7ab;">Stretch Part/Assembly</div>
<div class="t " style="left:597.3px;top:108.0px;font-size:11.5px;line-height:14px;height:14px;letter-spacing:0.06px;color:#3a3a3a;">Delete Body</div>
<div class="t " style="left:740.0px;top:63.9px;font-size:11.5px;line-height:14px;height:14px;letter-spacing:-0.06px;color:#3a3a3a;">Rib</div>
<div class="t " style="left:740.0px;top:86.0px;font-size:11.5px;line-height:14px;height:14px;letter-spacing:0.58px;color:#3a3a3a;"><u>T</u>rim</div>
<div class="t " style="left:740.0px;top:108.0px;font-size:11.5px;line-height:14px;height:14px;letter-spacing:0.06px;color:#3a3a3a;"><u>E</u>mboss</div>
<div class="t " style="left:868.0px;top:63.9px;font-size:11.5px;line-height:14px;height:14px;letter-spacing:-0.02px;color:#3a3a3a;">Scale Body</div>
<div class="t " style="left:868.0px;top:86.0px;font-size:11.5px;line-height:14px;height:14px;letter-spacing:0.28px;color:#a4a7ab;">Copy Body</div>
<div class="t " style="left:868.0px;top:108.0px;font-size:11.5px;line-height:14px;height:14px;letter-spacing:0.21px;color:#3a3a3a;"><u>M</u>irror Feature</div>
<div class="t " style="left:987.4px;top:63.9px;font-size:11.5px;line-height:14px;height:14px;letter-spacing:0.05px;color:#3a3a3a;">Mo<u>v</u>e Face</div>
<div class="t " style="left:987.4px;top:86.0px;font-size:11.5px;line-height:14px;height:14px;letter-spacing:0.13px;color:#3a3a3a;"><u>M</u>atch Face</div>
<div class="t " style="left:987.4px;top:108.0px;font-size:11.5px;line-height:14px;height:14px;letter-spacing:0.02px;color:#3a3a3a;"><u>O</u>ffset Face</div>
<div class="t " style="left:1073.9px;top:63.9px;font-size:11.5px;line-height:14px;height:14px;letter-spacing:-0.09px;color:#3a3a3a;"><u>D</u>elete Face</div>
<div class="t " style="left:1073.9px;top:86.0px;font-size:11.5px;line-height:14px;height:14px;letter-spacing:-0.11px;color:#a4a7ab;"><u>E</u>dit Face Radius</div>
<div class="t " style="left:1073.9px;top:108.0px;font-size:11.5px;line-height:14px;height:14px;letter-spacing:-0.13px;color:#3a3a3a;">Split <u>F</u>aces</div>
<!--RIBBON_END-->
<!--SELTB-->
<!--DOCTABS-->
<!-- VIEWPORT -->
<div id="vp" class="abs"></div>
<div id="vpbL" class="abs"></div>
<div id="vpbT" class="abs"></div>
<div id="vpbB" class="abs"></div>
<!--MODEL_START-->
<svg id="model" style="left:389px;top:207px" width="1288" height="754" viewBox="389 207 1288 754">
<defs>
<linearGradient id="fil" x1="0" y1="0" x2="0.3" y2="1"><stop offset="0" stop-color="#8a8a95"/><stop offset=".5" stop-color="#a1a1ac"/><stop offset="1" stop-color="#9999a5"/></linearGradient>
</defs>
<!-- top face -->
<polygon points="541.2,491.9 840.3,421.2 1562,478.6 1296.3,569.6" fill="#85858f"/>
<!-- left inner face -->
<polygon points="543,495 843.2,526.8 847.7,597.5 560.5,683" fill="#9898a4"/>
<!-- back wall orange -->
<polygon points="843.2,526.8 1296,574 1301.5,650 847.7,596.5" fill="#c46a0c"/>
<!-- floor orange -->
<polygon points="847.7,598 1301.4,653.5 1309,804 560.5,683" fill="#b45c03"/>
<!-- floor-back highlight strip -->
<polygon points="847.7,595.4 1301.4,649.2 1301.4,653.8 847.7,599" fill="#f0a444"/>
<!-- bottom rim -->
<polygon points="558,685.2 560.5,682.9 1308.6,801.6 1311.3,806.1" fill="#e08a1e"/>
<!-- right face -->
<polygon points="1303.2,578 1570.8,486.5 1575.8,690.2 1311.3,806.1" fill="#9797a3"/>
<!-- fillet strip -->
<path d="M1296.3,569.6 L1562,478.6 Q1570.5,479.5 1571.2,486.6 L1303.2,578 Q1301,572 1296.3,569.6Z" fill="url(#fil)"/>
<!-- front top rim (sheet thickness) -->
<polygon points="541.2,491.9 1296.3,569.6 1295,574 543.4,496.3" fill="#a6aab5"/>
<!-- left rim -->
<polygon points="541.2,491.9 543.6,496.3 560.6,682.8 558,685.2" fill="#8e96a4"/>
<!-- right vertical rim -->
<path d="M1296.3,569.6 Q1301.5,572 1302.8,578 L1311.3,806.1 L1308.7,805 L1301.2,640 L1298.3,580 Q1297.5,575 1294,574Z" fill="#a9adb8"/>
<g fill="none" stroke="#1a222c" stroke-width="1.15" stroke-linejoin="round" stroke-linecap="round">
<!-- outer silhouette -->
<path d="M558,685.2 L541.3,497 Q541,492.5 545,491 L840.3,421.2"/>
<path d="M840.3,421.2 L1562,478.6" stroke-dasharray="6.5,2.2" stroke="#222c38"/>
<path d="M1562,478.6 Q1570.6,479.6 1571.3,487 L1575.8,690.2 L1311.3,806.1 L558,685.2"/>
<!-- fillet lines -->
<path d="M1562.5,478.8 L1296.3,569.6"/>
<path d="M1570.6,486.6 L1303.2,578"/>
<!-- front top edge lines -->
<path d="M543,492 L1296.3,569.6 Q1301.6,572 1302.8,578.5 L1311.3,806.1"/>
<path d="M543.6,496.6 L1290,573.4 Q1297.6,574.4 1298.3,581 L1301.3,642 L1308.8,805"/>
<!-- left inner line -->
<path d="M543.6,497 L560.6,682.8"/>
<!-- inner back vertical -->
<path d="M843.2,527 L847.7,597"/>
<!-- floor left edge -->
<path d="M847.7,597.3 L560.6,682.8"/>
<!-- floor back strip lines -->
<path d="M847.7,595.4 L1301.4,649.2" stroke-width="1" stroke="#2a1804"/>
<path d="M847.7,599 L1301.4,653.8" stroke-width="1" stroke="#2a1804"/>
<!-- bottom inner line -->
<path d="M560.6,682.8 L1308.6,801.6" stroke="#2a1a06"/>
</g>
</svg>
<!-- axis triad -->
<svg style="left:400px;top:885px" width="60" height="55" viewBox="400 885 60 55">
<path d="M424.5,923 V912" stroke="#5fe07a" stroke-width="2.2"/>
<path d="M424.5,906 L421.3,914.5 H427.7Z" fill="#1d8a2e"/>
<path d="M425,924.5 L436,925.5" stroke="#d22" stroke-width="1.6"/>
<path d="M441.5,926 L434,922.8 L433.5,929Z" fill="#f07070"/>
<path d="M424,924.5 L418,927" stroke="#4040d0" stroke-width="1.8"/>
<path d="M413.5,928.5 L421,924 L421.5,928.5Z" fill="#8a8af0"/>
<text x="421.5" y="899" font-family="Liberation Sans" font-size="8.5" font-weight="bold" fill="#6fdc86">Y</text>
<text x="444.5" y="929.5" font-family="Liberation Sans" font-size="9" font-weight="bold" fill="#e06a72">X</text>
<text x="406.5" y="932" font-family="Liberation Sans" font-size="9" font-weight="bold" fill="#3c38c8">Z</text>
</svg>
<!--MODEL_END-->
<!-- SCENE -->
<div id="scenehdr" class="abs"></div>
<div id="scenebody" class="abs"></div>
<div id="tree" class="abs"></div>
<div id="split" class="abs"></div>
<!--SCENE_START-->
<div class="abs" style="left:61px;top:159px;width:2px;height:19px;background:repeating-linear-gradient(#b9bcc1 0 2px,transparent 2px 4px)"></div>
<svg style="left:68.0px;top:159.0px" width="17" height="16" viewBox="0 0 17 16"><path d="M1,9.5H5V5.5H9V3L14,7.5L9,12V9.5H7V13.5H1Z" fill="#b5b8bc" stroke="#9a9da2" stroke-width=".8"/><g transform="translate(9,3) scale(.8)"><path d="M1,1V11.5L3.6,9L5.6,13.5L7.4,12.7L5.4,8.3H9Z" fill="#e9eaec" stroke="#8a8d92" stroke-width="1"/></g></svg>
<div class="abs" style="left:88px;top:156px;width:22px;height:21px;background:#fde9a3;border:1px solid #e6b84e;border-radius:2px"></div>
<svg style="left:94.0px;top:159.0px" width="11" height="15" viewBox="0 0 11 15"><path d="M1,1V11.5L3.6,9L5.6,13.5L7.4,12.7L5.4,8.3H9Z" fill="#fff" stroke="#111" stroke-width="1" stroke-linejoin="round"/></svg>
<svg style="left:113.0px;top:158.0px" width="17" height="17" viewBox="0 0 17 17"><rect x="1" y="1.5" width="9" height="7" fill="#fff" stroke="#8a8d92" stroke-width="1"/><g transform="translate(7,3.5) scale(.9)"><path d="M1,1V11.5L3.6,9L5.6,13.5L7.4,12.7L5.4,8.3H9Z" fill="#fff" stroke="#111" stroke-width="1" stroke-linejoin="round"/></g></svg>
<div class="abs" style="left:133px;top:158px;width:146px;height:20px;background:#fff"></div>
<div class="abs" style="left:265px;top:159px;width:13px;height:18px;background:#f1f2f4"></div>
<svg style="left:269.0px;top:165.0px" width="5.4" height="3" viewBox="0 0 5.4 3"><path d="M0,0H5.4L2.7,3Z" fill="#555"/></svg>
<div class="abs" style="left:284px;top:158px;width:144px;height:20px;background:#fff"></div>
<div class="abs" style="left:415px;top:159px;width:13px;height:18px;background:#f1f2f4"></div>
<svg style="left:419.5px;top:166.5px" width="5.4" height="3" viewBox="0 0 5.4 3"><path d="M0,0H5.4L2.7,3Z" fill="#555"/></svg>
<svg style="left:435.0px;top:160.0px" width="17" height="15" viewBox="0 0 17 15"><path d="M8.5,5V8M3.5,10.5V8H13.5V10.5" fill="none" stroke="#1a3aa8" stroke-width="1.1"/><rect x="5.3" y=".6" width="6.4" height="4.6" fill="#8e1a1e" stroke="#5a0a0a" stroke-width=".8"/><rect x=".6" y="10" width="6" height="4.4" fill="#1a2ab8" stroke="#1a3aa8" stroke-width="1"/><rect x="10.2" y="10" width="6" height="4.4" fill="#1e8a34" stroke="#1a3aa8" stroke-width="1"/></svg>
<svg style="left:20px;top:184px" width="340" height="24" viewBox="20 184 340 24"><defs><linearGradient id="tab2g" x1="0" y1="0" x2="0" y2="1"><stop offset="0" stop-color="#fdfdfd"/><stop offset="1" stop-color="#e4e6ea"/></linearGradient></defs>
<path d="M26.5,206.5 L48,186.5 H199.5 Q201.5,186.5 201.5,188.5 V206.5Z" fill="#fff" stroke="#8e9196" stroke-width="1"/>
<path d="M26.5,206.5 V186.5 H48" fill="none" stroke="#8e9196" stroke-width="1"/>
<path d="M27,206V187H47.3Z" fill="#f3f4f5"/>
<path d="M202.5,206.5 V188.5 Q202.5,186.5 204.5,186.5 H340 Q342.5,186.5 342.5,189 V206.5" fill="url(#tab2g)" stroke="#8e9196" stroke-width="1"/>
<path d="M189,195L196,201.5M196,195L189,201.5" stroke="#444" stroke-width="1.3"/>
</svg>
<div class="abs" style="left:27px;top:206px;width:175px;height:1px;background:#fff"></div>
<svg style="left:1664.0px;top:193.5px" width="10" height="6" viewBox="0 0 10 6"><path d="M0,0H9.6L4.8,5.4Z" fill="#5a5a5a"/></svg>
<svg style="left:354.0px;top:211.0px" width="8" height="10" viewBox="0 0 8 10"><path d="M1.5,.6H6.5M2.2,.6V5M5.8,.6V5M.4,5.2H7.6M4,5.2V9.4" fill="none" stroke="#5a6068" stroke-width="1.1"/></svg>
<svg style="left:369.5px;top:213.0px" width="9" height="8" viewBox="0 0 9 8"><path d="M.8,.6L8,7.4M8,.6L.8,7.4" stroke="#5a6068" stroke-width="1.3"/></svg>
<div class="abs" style="left:342px;top:232px;width:17px;height:18px;background:#f4f1ee"></div>
<svg style="left:344.0px;top:234.0px" width="14" height="15" viewBox="0 0 14 15"><path d="M1,1.6L12.4,13M11.5,.4L.4,13.6" stroke="#b83034" stroke-width="1.9"/></svg>
<div class="abs" style="left:361px;top:232px;width:19px;height:18px;background:#f6f3ee"></div>
<svg style="left:362.0px;top:233.0px" width="18" height="17" viewBox="0 0 18 17"><g transform="translate(3.4,.4)"><g fill="#eef6fc" stroke="#467a9e" stroke-width=".75"><path d="M8,3L5.7,7.2M8,3L10.3,7.2M5.7,9.4L3.9,13.1M5.7,9.4L8,13.1M10.3,9.4L8,13.1M10.3,9.4L12.1,13.1" fill="none"/><rect x="7" y=".8" width="2" height="2.2"/><rect x="4.7" y="7.2" width="2" height="2.2"/><rect x="9.3" y="7.2" width="2" height="2.2"/><rect x="2.9" y="13.1" width="2" height="2.2"/><rect x="7" y="13.1" width="2" height="2.2"/><rect x="11.1" y="13.1" width="2" height="2.2"/></g></g><g transform="translate(1,.2)"><path d="M3.2,.4V6.2M.3,3.3H6.1M1.2,1.3L5.2,5.3M5.2,1.3L1.2,5.3" stroke="#f2b430" stroke-width=".8"/><circle cx="3.2" cy="3.3" r="1.7" fill="#eea11a"/></g></svg>
<div class="abs" style="left:31px;top:277px;width:1px;height:131px;background:#a8a8a8"></div>
<div class="abs" style="left:33px;top:281px;width:5px;height:1px;background:repeating-linear-gradient(90deg,#8a8a8a 0 1px,transparent 1px 2px)"></div>
<div class="abs" style="left:33px;top:299px;width:5px;height:1px;background:repeating-linear-gradient(90deg,#8a8a8a 0 1px,transparent 1px 2px)"></div>
<div class="abs" style="left:33px;top:317px;width:5px;height:1px;background:repeating-linear-gradient(90deg,#8a8a8a 0 1px,transparent 1px 2px)"></div>
<div class="abs" style="left:33px;top:335px;width:5px;height:1px;background:repeating-linear-gradient(90deg,#8a8a8a 0 1px,transparent 1px 2px)"></div>
<div class="abs" style="left:33px;top:353px;width:5px;height:1px;background:repeating-linear-gradient(90deg,#8a8a8a 0 1px,transparent 1px 2px)"></div>
<div class="abs" style="left:33px;top:371px;width:5px;height:1px;background:repeating-linear-gradient(90deg,#8a8a8a 0 1px,transparent 1px 2px)"></div>
<div class="abs" style="left:33px;top:389px;width:5px;height:1px;background:repeating-linear-gradient(90deg,#8a8a8a 0 1px,transparent 1px 2px)"></div>
<div class="abs" style="left:33px;top:407px;width:5px;height:1px;background:repeating-linear-gradient(90deg,#8a8a8a 0 1px,transparent 1px 2px)"></div>
<svg style="left:31.0px;top:256.0px" width="5" height="14" viewBox="0 0 5 14"><path d="M0,2Q3,1 4,3.5M0,8Q3,7 4,9.5" fill="none" stroke="#c81818" stroke-width="1.4"/><path d="M1,10.5L4.5,9.5L3.5,13Z" fill="#c81818"/></svg>
<svg style="left:37px;top:271px" width="18" height="18" viewBox="37 271 18 18"><path d="M44,285 V275.5 M44,281.7 H50.5 M44,281.7 L40.8,285" fill="none" stroke="#333" stroke-width="2"/><path d="M44,272.6 L40.9,276.6 H47.1Z M53.2,281.7 L49.4,278.8 V284.6Z M38.6,287.4 L39.2,283 L43,286.6Z" fill="#333"/></svg>
<svg style="left:38.0px;top:289.7px" width="16" height="16" viewBox="0 0 16 16"><path d="M1,4L5,1.5L9,3L11,2L15,5V12L11,15L7,13L5,14L1,10Z" fill="#c9cbce" stroke="#9c9fa3" stroke-width="1" stroke-linejoin="round"/><path d="M1,4L5,6.5L9,3M5,6.5V14M7,8L11,5.5L15,5M7,8V13M11,5.5V9" fill="none" stroke="#9c9fa3" stroke-width=".9"/></svg>
<svg style="left:38.0px;top:307.7px" width="16" height="16" viewBox="0 0 16 16"><path d="M1,4L5,1.5L9,3L11,2L15,5V12L11,15L7,13L5,14L1,10Z" fill="#ffffff" stroke="#222" stroke-width="1" stroke-linejoin="round"/><path d="M1,4L5,6.5L9,3M5,6.5V14M7,8L11,5.5L15,5M7,8V13M11,5.5V9" fill="none" stroke="#222" stroke-width=".9"/></svg>
<svg style="left:38.0px;top:325.7px" width="16" height="16" viewBox="0 0 16 16"><path d="M1,9L5.5,6.5V3.5L10,1H13.5V6L15,7V11.5L10.5,15H1Z" fill="#2e6fd0" stroke="#0e2f7a" stroke-width="1.1" stroke-linejoin="round"/><path d="M5.5,3.5H10V7H5.5ZM1.5,9.5H10.5V14.5H1.5Z" fill="#4f8fe8" stroke="#0e2f7a" stroke-width=".8"/><path d="M6,3.2L10,1.4H13L10,3.2Z" fill="#9cc2f6"/></svg>
<svg style="left:38.0px;top:343.7px" width="16" height="16" viewBox="0 0 16 16"><path d="M1,9L5.5,6.5V3.5L10,1H13.5V6L15,7V11.5L10.5,15H1Z" fill="#2e6fd0" stroke="#0e2f7a" stroke-width="1.1" stroke-linejoin="round"/><path d="M5.5,3.5H10V7H5.5ZM1.5,9.5H10.5V14.5H1.5Z" fill="#4f8fe8" stroke="#0e2f7a" stroke-width=".8"/><path d="M6,3.2L10,1.4H13L10,3.2Z" fill="#9cc2f6"/></svg>
<svg style="left:38.0px;top:361.7px" width="16" height="16" viewBox="0 0 16 16"><g transform="translate(7.5,0)"><path d="M1.8,4V2.5Q1.8,.6 3.8,.6T5.8,2.5V4" fill="none" stroke="#4a2a10" stroke-width="1"/><rect x=".6" y="4" width="6.4" height="4.8" fill="#e9b48a" stroke="#4a2a10" stroke-width="1"/><rect x="3.2" y="5.6" width="1.2" height="1.8" fill="#4a2a10"/></g><g transform="translate(0.5,6.5)"><path d="M1.8,4V2.5Q1.8,.6 3.8,.6T5.8,2.5V4" fill="none" stroke="#4a2a10" stroke-width="1"/><rect x=".6" y="4" width="6.4" height="4.8" fill="#e9b48a" stroke="#4a2a10" stroke-width="1"/><rect x="3.2" y="5.6" width="1.2" height="1.8" fill="#4a2a10"/></g></svg>
<svg style="left:38.0px;top:379.7px" width="17" height="16" viewBox="0 0 17 16"><circle cx="4.5" cy="3.6" r="2.6" fill="#fff" stroke="#111" stroke-width="1.4"/><circle cx="10.5" cy="3.6" r="2.6" fill="#fff" stroke="#111" stroke-width="1.4"/><rect x="1" y="6.5" width="12" height="8.5" fill="#1a1a1a"/><rect x="2.6" y="9.5" width="8.8" height="4.2" fill="#8a8fd8"/><path d="M13,9.5L16,7.5V14.5L13,12.5Z" fill="#1a1a1a"/><rect x="2.6" y="7.6" width="8.8" height="1" fill="#fff"/></svg>
<svg style="left:38.0px;top:397.7px" width="16" height="16" viewBox="0 0 16 16"><path d="M1,1.5L3.5,.5L7.5,5.5L5,7Z" fill="#2a4ab8" stroke="#1a2a7a" stroke-width=".8"/><path d="M5,7L7.5,5.5L15,12Q14.5,15.5 10.5,14.5Z" fill="#f0cfa8" stroke="#8a6a4a" stroke-width=".8"/><path d="M2,6L14,15.5" stroke="#555" stroke-width=".8"/></svg>
<div class="abs" style="left:31px;top:919px;width:349px;height:17px;background:#f0f0f0"></div>
<div class="abs" style="left:56px;top:920px;width:193px;height:15px;background:#cdcdcd"></div>
<svg style="left:36.0px;top:923.0px" width="7" height="9" viewBox="0 0 7 9"><path d="M5.6,.8L1.4,4.5L5.6,8.2" fill="none" stroke="#4a4a4a" stroke-width="2"/></svg>
<svg style="left:367.0px;top:923.0px" width="7" height="9" viewBox="0 0 7 9"><path d="M1.4,.8L5.6,4.5L1.4,8.2" fill="none" stroke="#4a4a4a" stroke-width="2"/></svg>
<div class="abs" style="left:30px;top:940px;width:56px;height:20px;background:#fff;border:1px solid #c2c6cb;border-top:none;border-radius:0 0 3px 3px"></div>
<div class="abs" style="left:33px;top:942px;width:14px;height:16px;background:#f2eee4"></div>
<svg style="left:32.0px;top:942.0px" width="16" height="16" viewBox="0 0 16 16"><g fill="#eef6fc" stroke="#467a9e" stroke-width=".75"><path d="M8,3L5.7,7.2M8,3L10.3,7.2M5.7,9.4L3.9,13.1M5.7,9.4L8,13.1M10.3,9.4L8,13.1M10.3,9.4L12.1,13.1" fill="none"/><rect x="7" y=".8" width="2" height="2.2"/><rect x="4.7" y="7.2" width="2" height="2.2"/><rect x="9.3" y="7.2" width="2" height="2.2"/><rect x="2.9" y="13.1" width="2" height="2.2"/><rect x="7" y="13.1" width="2" height="2.2"/><rect x="11.1" y="13.1" width="2" height="2.2"/></g></svg>
<svg style="left:91.0px;top:941.0px" width="18" height="18" viewBox="0 0 18 18"><circle cx="6.5" cy="6.5" r="4.8" fill="#cfe2f6" stroke="#8a8f98" stroke-width="1.5"/><path d="M4,5.5Q5.5,3.5 8,4" fill="none" stroke="#fff" stroke-width="1.2"/><path d="M10.2,10.2L15.5,15.5" stroke="#d8a23a" stroke-width="3" stroke-linecap="round"/></svg>
<svg style="left:157.0px;top:941.0px" width="14" height="17" viewBox="0 0 14 17"><rect x=".7" y=".7" width="12" height="15" rx="1" fill="#fff" stroke="#444" stroke-width="1.1"/><rect x="2.5" y="2.5" width="6" height="5" fill="#3a5a98"/><path d="M3,11.5H9.5M3,11.5L5,10M3,11.5L5,13" fill="none" stroke="#444" stroke-width=".9"/></svg>
<div class="abs" style="left:4px;top:965px;width:110px;height:21px;background:linear-gradient(#fbe48a,#fcefb8 50%,#fdf5d2);border:1px solid #efd98e"></div>
<svg style="left:8.0px;top:968.0px" width="14" height="15" viewBox="0 0 14 15"><rect x=".7" y="1" width="10" height="13" rx="1" fill="#fff" stroke="#333" stroke-width="1.2"/><path d="M10.7,1.5H12.8V7" fill="none" stroke="#333" stroke-width="1.1"/><path d="M3.2,4.5V6.5M3.2,9V11M7.6,4.5V6.5M7.6,9V11" stroke="#333" stroke-width="1.6"/></svg>
<div class="t " style="left:137.0px;top:160.8px;font-size:11.5px;line-height:14px;height:14px;letter-spacing:0.59px;color:#222;">Any</div>
<div class="t " style="left:288.4px;top:161.0px;font-size:11px;line-height:14px;height:14px;letter-spacing:0.25px;color:#111;">uk hydra 4000</div>
<div class="t " style="left:63.7px;top:188.8px;font-size:11.5px;line-height:14px;height:14px;letter-spacing:-0.02px;color:#111;font-weight:bold;">hydra 4000 a...le.ics*</div>
<div class="t " style="left:221.6px;top:188.8px;font-size:11.5px;line-height:14px;height:14px;letter-spacing:-0.01px;color:#222;">hydra 4000 a...le.icd*</div>
<div class="t " style="left:30.1px;top:209.9px;font-size:11.5px;line-height:14px;height:14px;letter-spacing:-0.18px;color:#5b6473;">Scene</div>
<div class="t " style="left:40.3px;top:255.0px;font-size:11.5px;line-height:14px;height:14px;letter-spacing:0.28px;color:#000;">C:\Users\Public\Documents\data\2015\word\TECH-NET\newsle</div>
<div class="t " style="left:59.3px;top:273.2px;font-size:11.5px;line-height:14px;height:14px;letter-spacing:0.11px;color:#000;">Global Coordinate System</div>
<div class="t " style="left:59.3px;top:291.2px;font-size:11.5px;line-height:14px;height:14px;letter-spacing:0.32px;color:#000;">Archive</div>
<div class="t " style="left:59.3px;top:309.2px;font-size:11.5px;line-height:14px;height:14px;letter-spacing:-0.42px;color:#000;">HYDRA 4000 REV 2</div>
<div class="t " style="left:59.3px;top:327.2px;font-size:11.5px;line-height:14px;height:14px;letter-spacing:-0.10px;color:#000;">Part167</div>
<div class="t " style="left:59.3px;top:345.2px;font-size:11.5px;line-height:14px;height:14px;letter-spacing:-0.10px;color:#000;">Part168</div>
<div class="t " style="left:59.3px;top:363.2px;font-size:11.5px;line-height:14px;height:14px;letter-spacing:0.19px;color:#000;">Constraints</div>
<div class="t " style="left:59.3px;top:381.2px;font-size:11.5px;line-height:14px;height:14px;letter-spacing:-0.05px;color:#000;">Cameras</div>
<div class="t " style="left:59.3px;top:399.2px;font-size:11.5px;line-height:14px;height:14px;letter-spacing:0.29px;color:#000;">Lights</div>
<div class="t " style="left:50.2px;top:944.1px;font-size:11.5px;line-height:14px;height:14px;letter-spacing:-0.20px;color:#3a3a3a;">Scene</div>
<div class="t " style="left:110.3px;top:944.1px;font-size:11.5px;line-height:14px;height:14px;letter-spacing:-0.26px;color:#3a3a3a;">Search</div>
<div class="t " style="left:174.2px;top:944.1px;font-size:11.5px;line-height:14px;height:14px;letter-spacing:0.09px;color:#3a3a3a;">Properties</div>
<div class="t " style="left:25.6px;top:969.3px;font-size:11.5px;line-height:14px;height:14px;letter-spacing:0.07px;color:#6e6e66;">Catalog Browser</div>
<!--SCENE_END-->
<!--LEFTTB_START-->
<div class="abs" style="left:0;top:372px;width:27px;height:592px;background:linear-gradient(90deg,#f7f8f9 0,#f1f2f4 22px,#c9ccd1 24.5px,#b3b7bc 26px,#d9dbdf 27px);border-radius:0 3px 3px 0"></div>
<div class="abs" style="left:5px;top:376px;width:15px;height:2px;background:repeating-linear-gradient(90deg,#b9bcc1 0 2px,transparent 2px 4px)"></div>
<svg style="left:5.0px;top:387.0px" width="16" height="12" viewBox="0 0 16 12"><path d="M1,3.5H5M3,1.5V5.5M1,9H5" stroke="#9c9fa3" stroke-width="1.2"/><rect x="6" y="2" width="8" height="8" fill="#b9bbbe" stroke="#9c9fa3" stroke-width="1"/><path d="M6,2L8,.5H15.5V8L14,10" fill="none" stroke="#9c9fa3"/></svg>
<svg style="left:5.0px;top:407.0px" width="16" height="15" viewBox="0 0 16 15"><circle cx="6" cy="9" r="5.2" fill="#b4b6b9" stroke="#9c9fa3" stroke-width="1"/><rect x="5" y="1" width="10" height="9" fill="#bcbec1" fill-opacity=".75" stroke="#9c9fa3" stroke-width="1"/></svg>
<div class="abs" style="left:6px;top:429px;width:14px;height:1px;background:#c3c6ca"></div>
<svg style="left:5.0px;top:437.0px" width="16" height="15" viewBox="0 0 16 15"><circle cx="6" cy="9" r="5.2" fill="#b4b6b9" stroke="#9c9fa3" stroke-width="1"/><rect x="5" y="1" width="10" height="9" fill="#bcbec1" fill-opacity=".75" stroke="#9c9fa3" stroke-width="1"/></svg>
<svg style="left:5.0px;top:459.0px" width="16" height="15" viewBox="0 0 16 15"><circle cx="6" cy="9" r="5.2" fill="#b4b6b9" stroke="#9c9fa3" stroke-width="1"/><rect x="5" y="1" width="10" height="9" fill="#d2d4d6" fill-opacity=".75" stroke="#9c9fa3" stroke-width="1"/></svg>
<svg style="left:5.0px;top:481.0px" width="16" height="15" viewBox="0 0 16 15"><circle cx="6" cy="9" r="5.2" fill="#b4b6b9" stroke="#9c9fa3" stroke-width="1"/><rect x="5" y="1" width="10" height="9" fill="#eceded" fill-opacity=".75" stroke="#9c9fa3" stroke-width="1"/></svg>
<div class="abs" style="left:0;top:500px;width:25px;height:12px;background:linear-gradient(90deg,#9fa3a8,#cfd2d6 55%,#eceef0);border-radius:0 0 6px 0"></div>
<svg style="left:17.0px;top:503.0px" width="6" height="6" viewBox="0 0 6 6"><path d="M.5,.3V5.7" stroke="#fff" stroke-width="1"/><path d="M2,.3L5.5,3L2,5.7Z" fill="#fff" stroke="#8a8d92" stroke-width=".4"/></svg>
<div class="abs" style="left:5px;top:518px;width:15px;height:2px;background:repeating-linear-gradient(90deg,#b9bcc1 0 2px,transparent 2px 4px)"></div>
<svg style="left:5.0px;top:526.0px" width="16" height="16" viewBox="0 0 16 16"><path d="M.7,4.7L4.7,.7H15.3V11.3L11.3,15.3H.7Z" fill="#dbe8f6"/><path d="M4.7,.7V11.3H15.3M4.7,11.3L.7,15.3" fill="none" stroke="#6e94c6" stroke-width=".8"/><path d="M.7,4.7H11.3V15.3H.7Z" fill="#2f65a8"/><path d="M.7,4.7H11.3V15.3H.7ZM.7,4.7L4.7,.7H15.3L11.3,4.7M15.3,.7V11.3L11.3,15.3" fill="none" stroke="#1f4a8a" stroke-width="1"/></svg>
<svg style="left:5.0px;top:548.0px" width="16" height="16" viewBox="0 0 16 16"><path d="M.7,4.7L4.7,.7H15.3V11.3L11.3,15.3H.7Z" fill="#dbe8f6"/><path d="M4.7,.7V11.3H15.3M4.7,11.3L.7,15.3" fill="none" stroke="#6e94c6" stroke-width=".8"/><path d="M.7,4.7L4.7,.7H15.3L11.3,4.7Z" fill="#2f65a8"/><path d="M.7,4.7H11.3V15.3H.7ZM.7,4.7L4.7,.7H15.3L11.3,4.7M15.3,.7V11.3L11.3,15.3" fill="none" stroke="#1f4a8a" stroke-width="1"/></svg>
<svg style="left:5.0px;top:570.0px" width="16" height="16" viewBox="0 0 16 16"><path d="M.7,4.7L4.7,.7H15.3V11.3L11.3,15.3H.7Z" fill="#dbe8f6"/><path d="M4.7,.7V11.3H15.3M4.7,11.3L.7,15.3" fill="none" stroke="#6e94c6" stroke-width=".8"/><path d="M.7,4.7L4.7,.7V11.3L.7,15.3Z" fill="#2f65a8"/><path d="M.7,4.7H11.3V15.3H.7ZM.7,4.7L4.7,.7H15.3L11.3,4.7M15.3,.7V11.3L11.3,15.3" fill="none" stroke="#1f4a8a" stroke-width="1"/></svg>
<svg style="left:5.0px;top:592.0px" width="16" height="16" viewBox="0 0 16 16"><path d="M.7,4.7L4.7,.7H15.3V11.3L11.3,15.3H.7Z" fill="#dbe8f6"/><path d="M4.7,.7V11.3H15.3M4.7,11.3L.7,15.3" fill="none" stroke="#6e94c6" stroke-width=".8"/><path d="M11.3,4.7L15.3,.7V11.3L11.3,15.3Z" fill="#2f65a8"/><path d="M.7,4.7H11.3V15.3H.7ZM.7,4.7L4.7,.7H15.3L11.3,4.7M15.3,.7V11.3L11.3,15.3" fill="none" stroke="#1f4a8a" stroke-width="1"/></svg>
<svg style="left:5.0px;top:614.0px" width="16" height="16" viewBox="0 0 16 16"><path d="M.7,4.7L4.7,.7H15.3V11.3L11.3,15.3H.7Z" fill="#dbe8f6"/><path d="M4.7,.7V11.3H15.3M4.7,11.3L.7,15.3" fill="none" stroke="#6e94c6" stroke-width=".8"/><path d="M4.7,.7H15.3V11.3H4.7Z" fill="#2f65a8"/><path d="M.7,4.7H11.3V15.3H.7ZM.7,4.7L4.7,.7H15.3L11.3,4.7M15.3,.7V11.3L11.3,15.3" fill="none" stroke="#1f4a8a" stroke-width="1"/></svg>
<svg style="left:5.0px;top:635.0px" width="16" height="16" viewBox="0 0 16 16"><path d="M.7,4.7L4.7,.7H15.3V11.3L11.3,15.3H.7Z" fill="#dbe8f6"/><path d="M4.7,.7V11.3H15.3M4.7,11.3L.7,15.3" fill="none" stroke="#6e94c6" stroke-width=".8"/><path d="M.7,15.3L4.7,11.3H15.3L11.3,15.3Z" fill="#2f65a8"/><path d="M.7,4.7H11.3V15.3H.7ZM.7,4.7L4.7,.7H15.3L11.3,4.7M15.3,.7V11.3L11.3,15.3" fill="none" stroke="#1f4a8a" stroke-width="1"/></svg>
<svg style="left:7.0px;top:659.0px" width="14" height="15" viewBox="0 0 14 15"><path d="M1,3L7,1L13,4V11L8,14L1,10Z" fill="#3a72b8" stroke="#1f4a8a" stroke-width="1" stroke-linejoin="round"/><path d="M1,3L8,6.5L13,4M8,6.5V14" fill="none" stroke="#1f4a8a" stroke-width=".9"/></svg>
<svg style="left:7.0px;top:681.0px" width="14" height="15" viewBox="0 0 14 15"><path d="M1,3L7,1L13,4V11L8,14L1,10Z" fill="#3a72b8" stroke="#1f4a8a" stroke-width="1" stroke-linejoin="round"/><path d="M1,3L8,6.5L13,4M8,6.5V14" fill="none" stroke="#1f4a8a" stroke-width=".9"/><path d="M1.6,3.9L7.5,6.9V13L1.6,9.7Z" fill="#fff"/></svg>
<svg style="left:7.0px;top:703.0px" width="14" height="15" viewBox="0 0 14 15"><path d="M1,3L7,1L13,4V11L8,14L1,10Z" fill="#3a72b8" stroke="#1f4a8a" stroke-width="1" stroke-linejoin="round"/><path d="M1,3L8,6.5L13,4M8,6.5V14" fill="none" stroke="#1f4a8a" stroke-width=".9"/><path d="M2.2,3L7,1.6L11.8,4L8,6Z" fill="#fff"/></svg>
<svg style="left:7.0px;top:725.0px" width="14" height="15" viewBox="0 0 14 15"><path d="M1,3L7,1L13,4V11L8,14L1,10Z" fill="#3a72b8" stroke="#1f4a8a" stroke-width="1" stroke-linejoin="round"/><path d="M1,3L8,6.5L13,4M8,6.5V14" fill="none" stroke="#1f4a8a" stroke-width=".9"/><path d="M1.6,3.9L7.5,6.9V13L1.6,9.7Z" fill="#fff"/></svg>
<div class="abs" style="left:0;top:745px;width:25px;height:12px;background:linear-gradient(90deg,#9fa3a8,#cfd2d6 55%,#eceef0);border-radius:0 0 6px 0"></div>
<svg style="left:17.0px;top:748.0px" width="6" height="6" viewBox="0 0 6 6"><path d="M.5,.3V5.7" stroke="#fff" stroke-width="1"/><path d="M2,.3L5.5,3L2,5.7Z" fill="#fff" stroke="#8a8d92" stroke-width=".4"/></svg>
<div class="abs" style="left:5px;top:761px;width:15px;height:2px;background:repeating-linear-gradient(90deg,#b9bcc1 0 2px,transparent 2px 4px)"></div>
<svg style="left:5.0px;top:769.0px" width="17" height="16" viewBox="0 0 17 16"><path d="M3.5,3L14,12" stroke="#222" stroke-width="1"/><path d="M1,5.5L6,.8M11.5,14.8L16.5,10" stroke="#222" stroke-width="1"/><path d="M3.5,3L6.5,4L4.8,6ZM14,12L11,11L12.7,9Z" fill="#222"/></svg>
<svg style="left:4.0px;top:790.0px" width="18" height="16" viewBox="0 0 18 16"><path d="M1.5,1V10M16,1V10M2,4H15.5" stroke="#d81818" stroke-width="1.5"/><path d="M2,4L5,2.2V5.8ZM15.5,4L12.5,2.2V5.8Z" fill="#d81818"/><ellipse cx="9" cy="11" rx="3.4" ry="2.2" fill="#2a6ad0" stroke="#123a8a" stroke-width=".7"/><ellipse cx="9" cy="11" rx="1.5" ry="1" fill="#cfe0fa"/></svg>
<svg style="left:4.0px;top:812.0px" width="18" height="17" viewBox="0 0 18 17"><path d="M1,1.5H9M1,15.5H9M5,2V15" stroke="#d81818" stroke-width="1.5"/><path d="M5,2L3.2,5H6.8ZM5,15L3.2,12H6.8Z" fill="#d81818"/><ellipse cx="12.5" cy="8" rx="3.4" ry="2.2" fill="#2a6ad0" stroke="#123a8a" stroke-width=".7"/><ellipse cx="12.5" cy="8" rx="1.5" ry="1" fill="#cfe0fa"/></svg>
<svg style="left:4.0px;top:835.0px" width="18" height="16" viewBox="0 0 18 16"><path d="M1,14.5H16M1,14.5L10.5,2" stroke="#222" stroke-width="1.1" fill="none"/><path d="M9.5,5Q13,8 13,14" fill="none" stroke="#222" stroke-width="1"/><path d="M8.6,4.2L11.5,5L9.6,7Z" fill="#222"/></svg>
<svg style="left:5.0px;top:857.0px" width="17" height="17" viewBox="0 0 17 17"><circle cx="8.5" cy="8.5" r="7" fill="#f4f5f6" stroke="#222" stroke-width="1.1"/><path d="M8.5,8.5L4,4.5" stroke="#222" stroke-width="1"/><path d="M3.2,3.8L6.2,4.6L4.4,6.4Z" fill="#222"/></svg>
<svg style="left:5.0px;top:878.0px" width="17" height="17" viewBox="0 0 17 17"><circle cx="8.5" cy="8.5" r="7" fill="#f4f5f6" stroke="#222" stroke-width="1.1"/><path d="M4,13L13,4" stroke="#222" stroke-width="1"/><path d="M3.3,13.7L4,10.8L6.2,13ZM13.7,3.3L13,6.2L10.8,4Z" fill="#222"/></svg>
<div class="abs" style="left:6px;top:902px;width:14px;height:1px;background:#c3c6ca"></div>
<svg style="left:4.0px;top:908.0px" width="18" height="17" viewBox="0 0 18 17"><path d="M2.5,14V7Q2.5,5 5,5H8.5" fill="none" stroke="#1a3a8a" stroke-width="1.6"/><path d="M.5,11.5H4.8L2.6,15.5Z" fill="#1a3a8a"/><text x="10" y="8.5" font-family="Liberation Sans" font-weight="bold" font-size="9" fill="#1a3a8a">A</text></svg>
<svg style="left:8.0px;top:931.0px" width="10" height="16" viewBox="0 0 10 16"><rect x=".5" y="4" width="8.5" height="11.5" fill="#4a4a4a"/><rect x="2.5" y="4" width="2" height="11.5" fill="#777"/><path d="M.5,.6H9M.5,2.6H9M.5,4.6H9" stroke="#222" stroke-width="1"/></svg>
<div class="abs" style="left:0;top:952px;width:25px;height:12px;background:linear-gradient(90deg,#9fa3a8,#cfd2d6 55%,#eceef0);border-radius:0 0 6px 0"></div>
<svg style="left:17.0px;top:955.0px" width="6" height="6" viewBox="0 0 6 6"><path d="M.5,.3V5.7" stroke="#fff" stroke-width="1"/><path d="M2,.3L5.5,3L2,5.7Z" fill="#fff" stroke="#8a8d92" stroke-width=".4"/></svg>

<!--LEFTTB_END-->
<!-- STATUS -->
<div id="statline" class="abs"></div>
<div id="status" class="abs"></div>
<div id="botline" class="abs"></div>
<!--STATUS_START-->
<div class="abs" style="left:900px;top:989px;width:1px;height:20px;background:#c9ccd0"></div>
<svg style="left:1146.0px;top:991.0px" width="16" height="16" viewBox="0 0 16 16"><circle cx="6.5" cy="6.5" r="5" fill="#f6f7f8" stroke="#555" stroke-width="1.5"/><path d="M4.5,4H7.5L8.8,5.3V9H4.5Z" fill="#fff" stroke="#555" stroke-width=".8"/><path d="M10.5,10.5L15,15" stroke="#444" stroke-width="2.4" stroke-linecap="round"/></svg>
<svg style="left:1169.0px;top:991.0px" width="16" height="16" viewBox="0 0 16 16"><circle cx="6.5" cy="6.5" r="5" fill="#f6f7f8" stroke="#555" stroke-width="1.5"/><rect x="4.3" y="4.3" width="4.4" height="4.4" fill="#fff" stroke="#555" stroke-width=".8"/><path d="M10.5,10.5L15,15" stroke="#444" stroke-width="2.4" stroke-linecap="round"/></svg>
<svg style="left:1193.0px;top:998.0px" width="4.6" height="3" viewBox="0 0 4.6 3"><path d="M0,0H4.6L2.3,3Z" fill="#666"/></svg>
<svg style="left:1203.0px;top:991.0px" width="17" height="16" viewBox="0 0 17 16"><path d="M1,6H9V14H1Z" fill="#f6e45a" stroke="#111" stroke-width="1.2"/><path d="M1,6L4,3H12L9,6M12,3V11L9,14" fill="#fff2a0" stroke="#111" stroke-width="1.2" stroke-linejoin="round"/><path d="M12.5,2V9M9.5,5.5H16M10.5,3.3L14.8,7.7M14.8,3.3L10.5,7.7" stroke="#d81818" stroke-width="1"/></svg>
<svg style="left:1228.0px;top:998.0px" width="4.6" height="3" viewBox="0 0 4.6 3"><path d="M0,0H4.6L2.3,3Z" fill="#666"/></svg>
<svg style="left:1239.0px;top:991.0px" width="17" height="16" viewBox="0 0 17 16"><path d="M1,5.5H11V15H1Z" fill="#3f78c0" stroke="#1a3f80" stroke-width="1"/><path d="M1,5.5L5,1.5H16L11,5.5Z" fill="#e6effa" stroke="#3f6aa8" stroke-width=".9" stroke-linejoin="round"/><path d="M11,5.5L16,1.5V10.5L11,15Z" fill="#c9dcf3" stroke="#3f6aa8" stroke-width=".9" stroke-linejoin="round"/></svg>
<svg style="left:1263.0px;top:998.0px" width="4.6" height="3" viewBox="0 0 4.6 3"><path d="M0,0H4.6L2.3,3Z" fill="#666"/></svg>
<svg style="left:1273.0px;top:991.0px" width="18" height="17" viewBox="0 0 18 17"><path d="M1,5.5L3.5,3.5V7.5ZM7,1L5,3.5H9ZM13,5.5L10.5,3.5V7.5Z" fill="#2a5aa8"/><path d="M3,5.5H11M7,3V8" stroke="#2a5aa8" stroke-width="1.2"/><rect x="6.5" y="6.5" width="8" height="6" fill="#e6e8eb" stroke="#444" stroke-width="1"/><rect x="9" y="9" width="7.5" height="7" fill="#fff" stroke="#444" stroke-width="1"/><rect x="10.5" y="12" width="4.5" height="2.6" fill="#888"/></svg>
<svg style="left:1298.0px;top:998.0px" width="4.6" height="3" viewBox="0 0 4.6 3"><path d="M0,0H4.6L2.3,3Z" fill="#666"/></svg>
<div class="abs" style="left:1306px;top:988px;width:24px;height:21px;background:#fcdc74;border:1px solid #e4b040;border-radius:2px"></div>
<svg style="left:1310.0px;top:991.0px" width="17" height="16" viewBox="0 0 17 16"><path d="M1,15V7L11,2.5H16V8L6,15Z" fill="#4e86cc" stroke="#1a3f80" stroke-width="1" stroke-linejoin="round"/><path d="M1.6,7.4L11,3.2H15.3L5.6,7.8Z" fill="#f2f7fd"/><path d="M6,8V15" stroke="#1a3f80" stroke-width=".8"/></svg>
<svg style="left:1332.0px;top:992.0px" width="17" height="14" viewBox="0 0 17 14"><circle cx="5" cy="9.5" r="3.3" fill="#f3f6fa" stroke="#2a5aa8" stroke-width="1.5"/><circle cx="12.5" cy="9.5" r="3.3" fill="#f3f6fa" stroke="#2a5aa8" stroke-width="1.5"/><path d="M8,9H9.5M2,7L4.5,1.5M15.5,7L13,1.5" fill="none" stroke="#2a5aa8" stroke-width="1.3"/></svg>
<svg style="left:1351.0px;top:998.0px" width="4.6" height="3" viewBox="0 0 4.6 3"><path d="M0,0H4.6L2.3,3Z" fill="#666"/></svg>
<div class="abs" style="left:1362px;top:988px;width:31px;height:21px;background:#fcdc74;border:1px solid #e4b040;border-radius:2px"></div>
<svg style="left:1366.0px;top:991.0px" width="17" height="16" viewBox="0 0 17 16"><path d="M1,5.5H11V15H1Z" fill="#a8c6ee" stroke="#333" stroke-width="1"/><path d="M1,5.5L5,1.5H16L11,5.5Z" fill="#dfeafa" stroke="#333" stroke-width="1" stroke-linejoin="round"/><path d="M11,5.5L16,1.5V10.5L11,15Z" fill="#c4d8f4" stroke="#333" stroke-width="1" stroke-linejoin="round"/></svg>
<svg style="left:1385.5px;top:998.0px" width="4.6" height="3" viewBox="0 0 4.6 3"><path d="M0,0H4.6L2.3,3Z" fill="#666"/></svg>
<svg style="left:1398.0px;top:991.0px" width="17" height="16" viewBox="0 0 17 16"><path d="M1,9L5,6.5V4L10,1.5H15V7.5L16,8V12L11,15.5H1Z" fill="#2458c0" stroke="#0e2a7a" stroke-width="1" stroke-linejoin="round"/><path d="M5.5,4.2H10V7H5.5ZM1.6,9.5H10.6V14.8H1.6Z" fill="#4f8fe8" stroke="#0e2a7a" stroke-width=".8"/><path d="M6,3.8L10,2H14L10.2,3.8Z" fill="#a8c8f6"/></svg>
<svg style="left:1418.0px;top:998.0px" width="4.6" height="3" viewBox="0 0 4.6 3"><path d="M0,0H4.6L2.3,3Z" fill="#666"/></svg>
<svg style="left:1430.0px;top:991.0px" width="17" height="16" viewBox="0 0 17 16"><path d="M1,9.5H5V5.5H9V3L14,7.5L9,12V9.5H7V13.5H1Z" fill="#b5b8bc" stroke="#9a9da2" stroke-width=".8"/><g transform="translate(9,4) scale(.8)"><path d="M1,1V11.5L3.6,9L5.6,13.5L7.4,12.7L5.4,8.3H9Z" fill="#e9eaec" stroke="#8a8d92" stroke-width="1"/></g></svg>
<div class="abs" style="left:1451px;top:988px;width:24px;height:21px;background:#fcdc74;border:1px solid #e4b040;border-radius:2px"></div>
<svg style="left:1458.0px;top:991.0px" width="11" height="15" viewBox="0 0 11 15"><path d="M1,1V11.5L3.6,9L5.6,13.5L7.4,12.7L5.4,8.3H9Z" fill="#fff" stroke="#111" stroke-width="1" stroke-linejoin="round"/></svg>
<svg style="left:1479.0px;top:991.0px" width="16" height="17" viewBox="0 0 16 17"><rect x="1" y="1.5" width="8" height="6" fill="#fff" stroke="#d2d5d9" stroke-width="1"/><g transform="translate(6,3.5) scale(.9)"><path d="M1,1V11.5L3.6,9L5.6,13.5L7.4,12.7L5.4,8.3H9Z" fill="#fff" stroke="#111" stroke-width="1" stroke-linejoin="round"/></g></svg>
<div class="abs" style="left:1500px;top:990px;width:86px;height:18px;background:#fff"></div>
<div class="abs" style="left:1575px;top:991px;width:11px;height:16px;background:#f1f2f4"></div>
<svg style="left:1579.0px;top:997.5px" width="4.8" height="3" viewBox="0 0 4.8 3"><path d="M0,0H4.8L2.4,3Z" fill="#555"/></svg>
<div class="abs" style="left:1590px;top:990px;width:64px;height:18px;background:#fff"></div>
<div class="abs" style="left:1643px;top:991px;width:11px;height:16px;background:#f1f2f4"></div>
<svg style="left:1645.2px;top:997.5px" width="4.8" height="3" viewBox="0 0 4.8 3"><path d="M0,0H4.8L2.4,3Z" fill="#555"/></svg>
<svg style="left:1657.5px;top:992.0px" width="17" height="15" viewBox="0 0 17 15"><path d="M8.5,5V8M3.5,10.5V8H13.5V10.5" fill="none" stroke="#1a3aa8" stroke-width="1.1"/><rect x="5.3" y=".6" width="6.4" height="4.6" fill="#c81a2a" stroke="#7a1a5a" stroke-width=".8"/><rect x=".6" y="10" width="6" height="4.4" fill="#9fc2f2" stroke="#1a3aa8" stroke-width="1"/><rect x="10.2" y="10" width="6" height="4.4" fill="#f2e36a" stroke="#1a3aa8" stroke-width="1"/></svg>
<div class="t " style="left:2.6px;top:990.7px;font-size:11.5px;line-height:14px;height:14px;letter-spacing:-0.16px;color:#333;">For Help, press F1</div>
<div class="t " style="left:916.1px;top:991.4px;font-size:11.5px;line-height:14px;height:14px;letter-spacing:-0.24px;color:#4a5666;">View size: 1290 x  755</div>
<div class="t " style="left:1054.0px;top:991.4px;font-size:11.5px;line-height:14px;height:14px;letter-spacing:0.18px;color:#4a5666;">Units: in, deg</div>
<div class="t " style="left:1502.5px;top:992.2px;font-size:11.5px;line-height:14px;height:14px;letter-spacing:0.49px;color:#222;">Any</div>
<div class="t " style="left:1592.5px;top:992.4px;font-size:11px;line-height:14px;height:14px;letter-spacing:0.49px;color:#111;">uk hydra</div>
<!--STATUS_END-->
</body>
</html>
